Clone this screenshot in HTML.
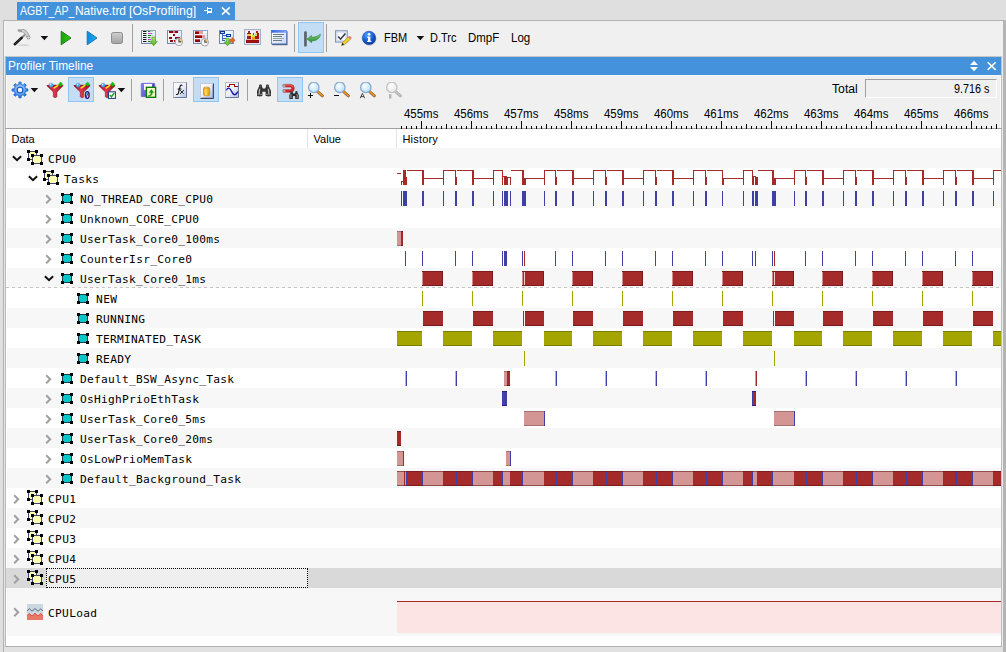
<!DOCTYPE html>
<html lang="en"><head><meta charset="utf-8"><title>Profiler Timeline</title>
<style>
html,body{margin:0;padding:0;}
body{width:1006px;height:652px;overflow:hidden;background:#dfdfdf;}
#root{position:relative;width:1006px;height:652px;overflow:hidden;background:#dfdfdf;}
#root div,#root span,#root svg{position:absolute;display:block;}
#root span{white-space:pre;}
</style></head><body><div id="root">
<div style="left:3px;top:20px;width:1003px;height:1px;background:#b2b2b2;"></div>
<div style="left:3px;top:20px;width:1px;height:632px;background:#b2b2b2;"></div>
<div style="left:4px;top:21px;width:999px;height:626px;background:#f0f0f0;"></div>
<div style="left:4px;top:21px;width:1px;height:35px;background:#f6f6f6;"></div>
<div style="left:4px;top:56px;width:1px;height:591px;background:#e6e6e6;"></div>
<div style="left:1002px;top:56px;width:1px;height:591px;background:#ebebeb;"></div>
<div style="left:5px;top:56px;width:997px;height:1px;background:#c6c6c6;"></div>
<div style="left:1003px;top:20px;width:3px;height:632px;background:#b4b4b4;"></div>
<div style="left:4px;top:647px;width:999px;height:5px;background:#e1e1e1;"></div>
<div style="left:17px;top:2px;width:218px;height:18px;background:#4592dc;"></div>
<span id="t1" style="left:19.9px;top:2.64px;font:12.3px/16px 'Liberation Sans', sans-serif;color:#fff;letter-spacing:0.000px;transform:scaleX(0.8543);transform-origin:0 0;">AGBT_AP_</span>
<span id="t2" style="left:74.6px;top:2.64px;font:12.3px/16px 'Liberation Sans', sans-serif;color:#fff;letter-spacing:0.000px;transform:scaleX(0.9688);transform-origin:0 0;">Native.trd </span>
<span id="t3" style="left:129.2px;top:2.64px;font:12.3px/16px 'Liberation Sans', sans-serif;color:#fff;letter-spacing:0.000px;transform:scaleX(1.0032);transform-origin:0 0;">[OsProfiling]</span>
<svg style="left:203px;top:6px" width="11" height="10" viewBox="0 0 11 10" ><g fill="#fff" shape-rendering="crispEdges"><rect x="1" y="4" width="3" height="1"/><rect x="4" y="1" width="1" height="7"/><rect x="5" y="2" width="4" height="1"/><rect x="8" y="2" width="1" height="5"/><rect x="5" y="5" width="4" height="2"/></g></svg>
<svg style="left:220px;top:6px" width="12" height="11" viewBox="0 0 12 11" ><path d="M1.9 1.4L9.7 8.6M9.7 1.4L1.9 8.6" stroke="#fff" stroke-width="1.5" fill="none"/></svg>
<svg style="left:12px;top:29px" width="20" height="18" viewBox="0 0 20 18" ><ellipse cx="11.5" cy="16.2" rx="6" ry="0.9" fill="#d6d6d6"/>
<path d="M9.6 8.9L12.4 6.2" stroke="#8a8a8a" stroke-width="2" stroke-linecap="round"/>
<path d="M2.8 15.2L9.6 8.9" stroke="#161616" stroke-width="2.6" stroke-linecap="round"/>
<path d="M3.4 14.6L9 9.4" stroke="#8a8a8a" stroke-width="0.6" stroke-dasharray="0.8 0.9"/>
<path d="M7.4 1.5C10.2 1 13 2.2 14.6 4.6C15.5 6 16 7 16.3 8" stroke="#8c8c8c" stroke-width="3.5" fill="none" stroke-linecap="round"/>
<path d="M7.4 1.5C10.2 1 13 2.2 14.6 4.6C15.5 6 16 7 16.3 8" stroke="#cfcfcf" stroke-width="2.3" fill="none" stroke-linecap="round"/>
<path d="M7 1.2L10 2.4" stroke="#8c8c8c" stroke-width="1.2"/>
<circle cx="16.5" cy="8.5" r="1.5" fill="#ececec" stroke="#868686" stroke-width="0.8"/></svg>
<svg style="left:40px;top:36px" width="9" height="5" viewBox="0 0 9 5" ><path d="M0.6 0H8.2L4.4 4.3Z" fill="#111"/></svg>
<svg style="left:59.4px;top:29px" width="14" height="18" viewBox="0 0 14 18" ><defs><linearGradient id="pg" x1="0" y1="0" x2="1" y2="0"><stop offset="0" stop-color="#1e9e10"/><stop offset="1" stop-color="#2fd000"/></linearGradient></defs>
<path d="M2.2 2.2V15.8L12 9Z" fill="url(#pg)" stroke="#237a23" stroke-width="1" stroke-linejoin="round"/></svg>
<svg style="left:85.4px;top:29px" width="14" height="18" viewBox="0 0 14 18" ><defs><linearGradient id="pb" x1="0" y1="0" x2="1" y2="0"><stop offset="0" stop-color="#0a88dc"/><stop offset="1" stop-color="#14b4ff"/></linearGradient></defs>
<path d="M2.2 2.2V15.8L12 9Z" fill="url(#pb)" stroke="#1a78b4" stroke-width="1" stroke-linejoin="round"/></svg>
<svg style="left:110px;top:31px" width="14" height="14" viewBox="0 0 14 14" ><defs><linearGradient id="sg" x1="0" y1="0" x2="0" y2="1"><stop offset="0" stop-color="#cfcfcf"/><stop offset="1" stop-color="#a2a2a2"/></linearGradient></defs>
<rect x="1.5" y="1.5" width="11" height="11" rx="1.8" fill="url(#sg)" stroke="#8e8e8e" stroke-width="1"/></svg>
<div style="left:132px;top:24px;width:1px;height:28px;background:#a0a0a0;"></div>
<svg style="left:141px;top:29px" width="17" height="18" viewBox="0 0 17 18" ><defs><linearGradient id="p1" x1="0" y1="0" x2="1" y2="1"><stop offset="0" stop-color="#ffffff"/><stop offset="0.5" stop-color="#eef2fb"/><stop offset="1" stop-color="#bccae6"/></linearGradient></defs>
<rect x="0.5" y="1.5" width="14" height="13" fill="url(#p1)" stroke="#94a4c4"/><path d="M0.5 1.5V14.5H14.5" stroke="#7686aa" fill="none"/><g shape-rendering="crispEdges"><rect x="2" y="2" width="3" height="1" fill="#1a1a1a"/><rect x="5" y="2" width="1" height="1" fill="#9a9a9a"/><rect x="7" y="2" width="2" height="1" fill="#0a8a0a"/><rect x="9" y="2" width="3" height="1" fill="#c8ccd4"/><rect x="2" y="4" width="3" height="1" fill="#1a1a1a"/><rect x="5" y="4" width="1" height="1" fill="#9a9a9a"/><rect x="7" y="4" width="4" height="1" fill="#c040d0"/><rect x="11" y="4" width="1" height="1" fill="#c8ccd4"/><rect x="2" y="6" width="3" height="1" fill="#1a1a1a"/><rect x="5" y="6" width="1" height="1" fill="#9a9a9a"/><rect x="7" y="6" width="3" height="1" fill="#0a8a0a"/><rect x="10" y="6" width="2" height="1" fill="#c8ccd4"/><rect x="2" y="8" width="3" height="1" fill="#1a1a1a"/><rect x="5" y="8" width="1" height="1" fill="#9a9a9a"/><rect x="7" y="8" width="2" height="1" fill="#0a8a0a"/><rect x="9" y="8" width="3" height="1" fill="#c8ccd4"/><rect x="2" y="10" width="3" height="1" fill="#1a1a1a"/><rect x="5" y="10" width="1" height="1" fill="#9a9a9a"/><rect x="7" y="10" width="3" height="1" fill="#c040d0"/><rect x="10" y="10" width="2" height="1" fill="#c8ccd4"/><rect x="2" y="12" width="3" height="1" fill="#1a1a1a"/><rect x="5" y="12" width="1" height="1" fill="#9a9a9a"/><rect x="7" y="12" width="2" height="1" fill="#0a8a0a"/><rect x="9" y="12" width="3" height="1" fill="#c8ccd4"/></g>
<defs><linearGradient id="ga" x1="0" y1="0" x2="0" y2="1"><stop offset="0" stop-color="#b4e870"/><stop offset="1" stop-color="#4cb020"/></linearGradient></defs>
<path d="M11 8.2H14.4V12.4H16.2L12.7 16.8L9.2 12.4H11Z" fill="url(#ga)" stroke="#4a9a20" stroke-width="0.6"/></svg>
<svg style="left:167px;top:29px" width="18" height="18" viewBox="0 0 18 18" ><defs><linearGradient id="p2" x1="0" y1="0" x2="1" y2="1"><stop offset="0" stop-color="#ffffff"/><stop offset="0.5" stop-color="#eef2fb"/><stop offset="1" stop-color="#bccae6"/></linearGradient></defs>
<rect x="0.5" y="1.5" width="14" height="13" fill="url(#p2)" stroke="#94a4c4"/><path d="M0.5 1.5V14.5H14.5" stroke="#7686aa" fill="none"/><g shape-rendering="crispEdges" fill="#900808"><rect x="2" y="2" width="4" height="2"/><rect x="6" y="2" width="2" height="2" fill="#d08080"/><rect x="8" y="2" width="3" height="2"/><rect x="6" y="5" width="2" height="2"/><rect x="2" y="8" width="3" height="2"/><rect x="8" y="8" width="5" height="2"/><rect x="3" y="11" width="3" height="2"/><rect x="7" y="11" width="2" height="2"/></g><circle cx="11.9" cy="12.9" r="3.7" fill="#f6f6f6" stroke="#a4a4a4" stroke-width="1"/>
<path d="M11.9 12.9V9.7A3.2 3.2 0 0 1 15.100000000000001 12.9Z" fill="#f0c070"/>
<path d="M11.9 10.3V12.9H14.3" stroke="#505050" stroke-width="1.1" fill="none"/></svg>
<svg style="left:193px;top:29px" width="18" height="18" viewBox="0 0 18 18" ><defs><linearGradient id="p3" x1="0" y1="0" x2="1" y2="1"><stop offset="0" stop-color="#ffffff"/><stop offset="0.5" stop-color="#eef2fb"/><stop offset="1" stop-color="#bccae6"/></linearGradient></defs>
<rect x="0.5" y="1.5" width="14" height="13" fill="url(#p3)" stroke="#94a4c4"/><path d="M0.5 1.5V14.5H14.5" stroke="#7686aa" fill="none"/><g shape-rendering="crispEdges"><rect x="2" y="2" width="4" height="3" fill="#900808"/><rect x="6" y="2" width="4" height="3" fill="#e0a0a0"/><rect x="2" y="6" width="7" height="3" fill="#900808"/><rect x="9" y="6" width="3" height="3" fill="#e0a0a0"/><rect x="2" y="10" width="5" height="3" fill="#900808"/>
<rect x="2" y="2" width="4" height="1" fill="#c05050"/><rect x="2" y="6" width="7" height="1" fill="#c05050"/><rect x="2" y="10" width="5" height="1" fill="#c05050"/></g><circle cx="11.8" cy="13.3" r="3.7" fill="#f6f6f6" stroke="#a4a4a4" stroke-width="1"/>
<path d="M11.8 13.3V10.100000000000001A3.2 3.2 0 0 1 15.0 13.3Z" fill="#f0c070"/>
<path d="M11.8 10.700000000000001V13.3H14.200000000000001" stroke="#505050" stroke-width="1.1" fill="none"/></svg>
<svg style="left:219px;top:29px" width="18" height="18" viewBox="0 0 18 18" ><defs><linearGradient id="p4" x1="0" y1="0" x2="1" y2="1"><stop offset="0" stop-color="#ffffff"/><stop offset="0.5" stop-color="#eef2fb"/><stop offset="1" stop-color="#bccae6"/></linearGradient></defs>
<rect x="0.5" y="1.5" width="14" height="13" fill="url(#p4)" stroke="#94a4c4"/><path d="M0.5 1.5V14.5H14.5" stroke="#7686aa" fill="none"/><g shape-rendering="crispEdges"><rect x="1" y="2" width="5" height="3" fill="#0a38a0"/><rect x="2" y="3" width="3" height="1" fill="#c8d8ff"/><rect x="7" y="5" width="5" height="3" fill="#0a38a0"/><rect x="8" y="6" width="3" height="1" fill="#c8d8ff"/>
<rect x="3" y="5" width="1" height="7" fill="#3868c8"/><rect x="3" y="6" width="4" height="1" fill="#3868c8"/><rect x="3" y="9" width="4" height="1" fill="#3868c8"/><rect x="3" y="11" width="3" height="1" fill="#3868c8"/></g>
<path d="M10.6 10.2H13V8.4L16.2 11.3L13 14.2V12.4H10.6Z" fill="#e06830" stroke="#b84818" stroke-width="0.5"/>
<path d="M7.2 9.2H9.8V13H11.8L8.5 16.8L5.2 13H7.2Z" fill="url(#ga)" stroke="#3a9a20" stroke-width="0.6"/></svg>
<svg style="left:244px;top:29px" width="18" height="17" viewBox="0 0 18 17" ><defs><linearGradient id="p5" x1="0" y1="0" x2="1" y2="1"><stop offset="0" stop-color="#ffffff"/><stop offset="1" stop-color="#c4d0ea"/></linearGradient></defs>
<rect x="0.5" y="0.5" width="16" height="15" fill="url(#p5)" stroke="#a4b0c8"/><rect x="1.5" y="1.5" width="14" height="13" fill="none" stroke="#dfe5f2"/>
<g shape-rendering="crispEdges"><rect x="2" y="10" width="13" height="1" fill="#e8b0b0"/><rect x="2" y="11" width="13" height="3" fill="#981010"/>
<rect x="4" y="2" width="2" height="2" fill="#b02020"/><rect x="3" y="4" width="4" height="6" fill="#a01818"/><rect x="3" y="5" width="4" height="2" fill="#e8d040"/>
<rect x="9" y="4" width="1" height="2" fill="#c03030"/><rect x="8" y="6" width="3" height="5" fill="#f0a020"/><rect x="8" y="6" width="3" height="2" fill="#d8e040"/>
<rect x="12" y="2" width="2" height="2" fill="#b02020"/><rect x="11" y="4" width="4" height="6" fill="#a01818"/><rect x="11" y="4" width="2" height="3" fill="#d8d840"/></g></svg>
<svg style="left:271px;top:29px" width="18" height="18" viewBox="0 0 18 18" ><defs><linearGradient id="p6" x1="0" y1="0" x2="1" y2="1"><stop offset="0" stop-color="#ffffff"/><stop offset="1" stop-color="#c8d8f8"/></linearGradient><linearGradient id="t6" x1="0" y1="0" x2="1" y2="0"><stop offset="0" stop-color="#3a68e0"/><stop offset="1" stop-color="#7aa0f0"/></linearGradient></defs>
<rect x="1.2" y="2.2" width="15.3" height="14" fill="#2a4468" opacity="0.85"/>
<rect x="0.5" y="1.5" width="15" height="13.4" fill="url(#p6)" stroke="#5a78c0" stroke-width="0.8"/>
<rect x="0.2" y="1.1" width="15.6" height="2.6" fill="url(#t6)"/>
<g shape-rendering="crispEdges" fill="#68807c"><rect x="2" y="5" width="11" height="1"/><rect x="2" y="7" width="9" height="1"/><rect x="2" y="9" width="11" height="1" fill="#98a8a8"/><rect x="2" y="11" width="9" height="1"/></g></svg>
<div style="left:294px;top:24px;width:1px;height:28px;background:#a0a0a0;"></div>
<div style="left:298px;top:22px;width:26px;height:31px;background:#c3ddf4;box-sizing:border-box;border:1px solid #90c6f3;"></div>
<svg style="left:303px;top:29px" width="19" height="19" viewBox="0 0 19 19" ><defs><linearGradient id="gt" x1="0" y1="0" x2="0" y2="1"><stop offset="0" stop-color="#7cd07c"/><stop offset="1" stop-color="#2a8a2a"/></linearGradient></defs>
<rect x="1.1" y="2.2" width="2.7" height="15.4" rx="1.2" fill="#5c646c"/>
<path d="M4 10L8.6 6.3V8.3C12 8.3 14.4 7.4 17.4 5C17.2 9.4 13.6 12 8.6 11.9V13.7Z" fill="url(#gt)" stroke="#2a7a2a" stroke-width="0.5"/></svg>
<div style="left:326px;top:24px;width:1px;height:28px;background:#a0a0a0;"></div>
<svg style="left:334px;top:29px" width="19" height="19" viewBox="0 0 19 19" ><rect x="1.6" y="1.8" width="11.6" height="11.2" fill="#f8fbff" stroke="#8494b4" stroke-width="1.2"/>
<rect x="2.9" y="3.1" width="9" height="8.6" fill="none" stroke="#ccd6ea" stroke-width="1"/>
<path d="M4.2 7.6L6.6 10.2L11.4 4.6" stroke="#34363e" stroke-width="1.5" fill="none"/>
<path d="M7.6 16.4L8.6 13.4L14.6 7.8L16.8 10L10.6 15.6Z" fill="#f2d428" stroke="#8a7a3a" stroke-width="0.6"/>
<path d="M14 8.4L16.2 10.6L17.4 9.4C17.8 9 17.8 8.6 17.4 8.2L16.4 7.2C16 6.8 15.6 6.8 15.2 7.2Z" fill="#e88070"/>
<path d="M7.6 16.4L8.5 13.8L10.2 15.5Z" fill="#222"/></svg>
<svg style="left:361px;top:30px" width="17" height="17" viewBox="0 0 17 17" ><defs><radialGradient id="ig" cx="0.38" cy="0.28" r="0.8"><stop offset="0" stop-color="#4aa0ff"/><stop offset="0.6" stop-color="#1458d0"/><stop offset="1" stop-color="#0a3498"/></radialGradient></defs>
<ellipse cx="8.6" cy="9.2" rx="6.8" ry="6.6" fill="#9aa0b0" opacity="0.5"/>
<circle cx="8" cy="7.9" r="6.7" fill="url(#ig)" stroke="#0a3296" stroke-width="0.5"/>
<rect x="7" y="6.6" width="2.4" height="5" fill="#fff"/><rect x="6.1" y="6.6" width="2" height="1.1" fill="#fff"/><rect x="6" y="10.8" width="4.4" height="1.1" fill="#fff"/><circle cx="8.1" cy="4.3" r="1.35" fill="#fff"/></svg>
<span id="t4" style="left:383.9px;top:29.74px;font:12.3px/16px 'Liberation Sans', sans-serif;color:#000;letter-spacing:0.000px;transform:scaleX(0.8972);transform-origin:0 0;">FBM</span>
<svg style="left:416.4px;top:36px" width="9" height="5" viewBox="0 0 9 5" ><path d="M0.6 0H8.2L4.4 4.3Z" fill="#111"/></svg>
<span id="t5" style="left:429.8px;top:29.74px;font:12.3px/16px 'Liberation Sans', sans-serif;color:#000;letter-spacing:0.000px;transform:scaleX(0.8916);transform-origin:0 0;">D.Trc</span>
<span id="t6" style="left:467.9px;top:29.74px;font:12.3px/16px 'Liberation Sans', sans-serif;color:#000;letter-spacing:0.000px;transform:scaleX(0.9318);transform-origin:0 0;">DmpF</span>
<span id="t7" style="left:510.8px;top:29.74px;font:12.3px/16px 'Liberation Sans', sans-serif;color:#000;letter-spacing:0.000px;transform:scaleX(0.9352);transform-origin:0 0;">Log</span>
<div style="left:6px;top:57px;width:995px;height:18px;background:#4592dc;"></div>
<span id="t8" style="left:7.7px;top:57.74px;font:12.3px/16px 'Liberation Sans', sans-serif;color:#fff;letter-spacing:0.000px;transform:scaleX(0.9665);transform-origin:0 0;">Profiler Timeline</span>
<svg style="left:969px;top:60px" width="10" height="12" viewBox="0 0 10 12" ><path d="M1 5L5 0.8L9 5ZM1 7L5 11.2L9 7Z" fill="#fff"/></svg>
<svg style="left:986px;top:60px" width="12" height="12" viewBox="0 0 12 12" ><path d="M1.7 2.3L9.7 9.9M9.7 2.3L1.7 9.9" stroke="#fff" stroke-width="1.5" fill="none"/></svg>
<div style="left:6px;top:75px;width:995px;height:1px;background:#f8f8f8;"></div>
<div style="left:6px;top:75px;width:1px;height:53px;background:#fafafa;"></div>
<div style="left:1000px;top:75px;width:1px;height:53px;background:#fafafa;"></div>
<svg style="left:11px;top:81px" width="18" height="18" viewBox="0 0 18 18" ><defs><radialGradient id="gg" cx="0.5" cy="0.45" r="0.55"><stop offset="0.3" stop-color="#b4d6fa"/><stop offset="0.62" stop-color="#5aa0ee"/><stop offset="1" stop-color="#0e5cd0"/></radialGradient></defs>
<path d="M10.05 16.83L7.95 16.83L7.80 14.57L5.91 13.79L4.21 15.28L2.72 13.79L4.21 12.09L3.43 10.20L1.17 10.05L1.17 7.95L3.43 7.80L4.21 5.91L2.72 4.21L4.21 2.72L5.91 4.21L7.80 3.43L7.95 1.17L10.05 1.17L10.20 3.43L12.09 4.21L13.79 2.72L15.28 4.21L13.79 5.91L14.57 7.80L16.83 7.95L16.83 10.05L14.57 10.20L13.79 12.09L15.28 13.79L13.79 15.28L12.09 13.79L10.20 14.57Z" fill="url(#gg)" stroke="#1a66d4" stroke-width="0.9" stroke-linejoin="round"/>
<circle cx="9" cy="9" r="2.9" fill="#f2f4f8" stroke="#1a5cc8" stroke-width="1.3"/></svg>
<svg style="left:30.4px;top:88px" width="9" height="5" viewBox="0 0 9 5" ><path d="M0.6 0H8.2L4.4 4.3Z" fill="#111"/></svg>
<svg style="left:46px;top:81px" width="20" height="19" viewBox="0 0 20 19" ><defs><linearGradient id="fg47" x1="0" y1="0" x2="1" y2="0"><stop offset="0" stop-color="#a00c1c"/><stop offset="0.45" stop-color="#de3850"/><stop offset="1" stop-color="#980c18"/></linearGradient></defs>
<g transform="translate(1 0)"><path d="M-0.2 4.7C-0.2 3.9 16.1 3.9 16.1 4.7L9.9 11V15.6C9.9 16.9 6.3 16.9 6.3 15.6V11Z" fill="url(#fg47)" stroke="#8a0a14" stroke-width="0.5" stroke-linejoin="round"/>
<ellipse cx="7.95" cy="4.8" rx="7.7" ry="0.9" fill="#a40c1e"/>
<path d="M7.2 6.8L10.8 4.5" stroke="#f8e020" stroke-width="1.6" stroke-linecap="round"/>
<circle cx="4.1" cy="4.2" r="2.05" fill="#4aacf0" stroke="#2a84d0" stroke-width="0.4"/><circle cx="3.6" cy="3.6" r="0.8" fill="#d4f0ff"/>
<path d="M13.6 0.9L15.7 3.2L13.6 5.5L11.5 3.2Z" fill="#0cc40c" stroke="#0a9a0a" stroke-width="0.4"/></g></svg>
<div style="left:68px;top:77px;width:26px;height:25px;background:#c3ddf4;box-sizing:border-box;border:1px solid #90c6f3;"></div>
<svg style="left:73px;top:81px" width="20" height="19" viewBox="0 0 20 19" ><defs><linearGradient id="fg74" x1="0" y1="0" x2="1" y2="0"><stop offset="0" stop-color="#a00c1c"/><stop offset="0.45" stop-color="#de3850"/><stop offset="1" stop-color="#980c18"/></linearGradient></defs>
<g transform="translate(1 0)"><path d="M-0.2 4.7C-0.2 3.9 16.1 3.9 16.1 4.7L9.9 11V15.6C9.9 16.9 6.3 16.9 6.3 15.6V11Z" fill="url(#fg74)" stroke="#8a0a14" stroke-width="0.5" stroke-linejoin="round"/>
<ellipse cx="7.95" cy="4.8" rx="7.7" ry="0.9" fill="#a40c1e"/>
<path d="M7.2 6.8L10.8 4.5" stroke="#f8e020" stroke-width="1.6" stroke-linecap="round"/>
<circle cx="4.1" cy="4.2" r="2.05" fill="#4aacf0" stroke="#2a84d0" stroke-width="0.4"/><circle cx="3.6" cy="3.6" r="0.8" fill="#d4f0ff"/>
<path d="M13.6 0.9L15.7 3.2L13.6 5.5L11.5 3.2Z" fill="#0cc40c" stroke="#0a9a0a" stroke-width="0.4"/><text x="10.2" y="17.6" font-family="Liberation Sans, sans-serif" font-weight="bold" font-size="10.6" fill="#dfe6f6" stroke="#dfe6f6" stroke-width="1.3">0</text><text x="10.2" y="17.6" font-family="Liberation Sans, sans-serif" font-weight="bold" font-size="10.6" fill="#14146c">0</text><path d="M11.9 16.4L14.5 11.4" stroke="#14146c" stroke-width="0.8"/></g></svg>
<svg style="left:98px;top:81px" width="20" height="19" viewBox="0 0 20 19" ><defs><linearGradient id="fg99" x1="0" y1="0" x2="1" y2="0"><stop offset="0" stop-color="#a00c1c"/><stop offset="0.45" stop-color="#de3850"/><stop offset="1" stop-color="#980c18"/></linearGradient></defs>
<g transform="translate(1 0)"><path d="M-0.2 4.7C-0.2 3.9 16.1 3.9 16.1 4.7L9.9 11V15.6C9.9 16.9 6.3 16.9 6.3 15.6V11Z" fill="url(#fg99)" stroke="#8a0a14" stroke-width="0.5" stroke-linejoin="round"/>
<ellipse cx="7.95" cy="4.8" rx="7.7" ry="0.9" fill="#a40c1e"/>
<path d="M7.2 6.8L10.8 4.5" stroke="#f8e020" stroke-width="1.6" stroke-linecap="round"/>
<circle cx="4.1" cy="4.2" r="2.05" fill="#4aacf0" stroke="#2a84d0" stroke-width="0.4"/><circle cx="3.6" cy="3.6" r="0.8" fill="#d4f0ff"/>
<path d="M13.6 0.9L15.7 3.2L13.6 5.5L11.5 3.2Z" fill="#0cc40c" stroke="#0a9a0a" stroke-width="0.4"/><rect x="9.4" y="10.8" width="7" height="6.6" fill="#fff" stroke="#183878" stroke-width="1"/><path d="M10.8 14L12.4 15.8L15.2 12" stroke="#18a018" stroke-width="1.4" fill="none"/></g></svg>
<svg style="left:117.4px;top:88px" width="9" height="5" viewBox="0 0 9 5" ><path d="M0.6 0H8.2L4.4 4.3Z" fill="#111"/></svg>
<div style="left:131px;top:79px;width:1px;height:22px;background:#a0a0a0;"></div>
<svg style="left:140px;top:82px" width="18" height="17" viewBox="0 0 18 17" ><defs><linearGradient id="fl" x1="0" y1="0" x2="1" y2="1"><stop offset="0" stop-color="#8080f4"/><stop offset="1" stop-color="#4c4cc4"/></linearGradient></defs>
<rect x="1.2" y="1.3" width="13.6" height="13.4" rx="0.8" fill="url(#fl)" stroke="#5454c8" stroke-width="0.5"/>
<rect x="4" y="2" width="8" height="6" fill="#fbfbff"/><rect x="12.8" y="2.4" width="1" height="2" fill="#303090"/>
<rect x="6.4" y="5.3" width="9.2" height="10" fill="#ffffcc" stroke="#0a7a0a" stroke-width="1.4"/>
<path d="M8.4 13.4C10 13.4 11 12.6 11 10.6H9L11.4 7.4L13.8 10.6H12.4C12.4 13.2 10.6 14.4 8.4 14.4Z" fill="#12a012" stroke="#0a8a0a" stroke-width="0.4"/></svg>
<div style="left:163px;top:79px;width:1px;height:22px;background:#a0a0a0;"></div>
<svg style="left:173px;top:82px" width="15" height="17" viewBox="0 0 15 17" ><defs><linearGradient id="b1" x1="0" y1="0" x2="1" y2="1"><stop offset="0" stop-color="#ffffff"/><stop offset="0.5" stop-color="#eef1fa"/><stop offset="1" stop-color="#acbce0"/></linearGradient></defs>
<rect x="0.5" y="0.5" width="13" height="15" fill="url(#b1)" stroke="#b4bccc"/><path d="M0.5 15.5H13.5V0.5" stroke="#6a7a9a" fill="none"/>
<path d="M9.4 3.6C8.4 2.6 7.4 3 7 4.6L5.4 11C5 12.4 4.2 12.8 3 12.4M4.6 7H8.4" stroke="#111" stroke-width="1.1" fill="none"/>
<path d="M7.2 8.2L10.6 11.8M10.8 8L7 12" stroke="#222" stroke-width="1" fill="none"/></svg>
<div style="left:193px;top:77px;width:26px;height:25px;background:#c3ddf4;box-sizing:border-box;border:1px solid #90c6f3;"></div>
<svg style="left:200px;top:83px" width="15" height="17" viewBox="0 0 15 17" ><defs><linearGradient id="b2" x1="0" y1="0" x2="1" y2="1"><stop offset="0" stop-color="#ffffff"/><stop offset="0.45" stop-color="#eef0fb"/><stop offset="1" stop-color="#a2b2e2"/></linearGradient>
<linearGradient id="cy" x1="0" y1="0" x2="1" y2="0"><stop offset="0" stop-color="#e89800"/><stop offset="0.35" stop-color="#ffe060"/><stop offset="1" stop-color="#e09000"/></linearGradient></defs>
<rect x="0.5" y="0.5" width="13" height="15" fill="url(#b2)" stroke="#c4ccdc"/><path d="M0.5 15.5H13.5V0.5" stroke="#3a4a66" fill="none"/><path d="M1.5 14.5H12.5V1.5" stroke="#8c9cc4" fill="none" opacity="0.7"/>
<rect x="3.5" y="4.2" width="6.2" height="8.6" rx="1.6" fill="url(#cy)" stroke="#c88a10" stroke-width="0.7"/><path d="M4 5.2C5 5.9 8.2 5.9 9.2 5.2" stroke="#c88a10" stroke-width="0.5" fill="none"/></svg>
<svg style="left:225px;top:82px" width="15" height="17" viewBox="0 0 15 17" ><defs><linearGradient id="b3" x1="0" y1="0" x2="1" y2="1"><stop offset="0" stop-color="#ffffff"/><stop offset="0.5" stop-color="#eef1fa"/><stop offset="1" stop-color="#acbce0"/></linearGradient></defs>
<rect x="0.5" y="0.5" width="13" height="15" fill="url(#b3)" stroke="#b4bccc"/><path d="M0.5 15.5H13.5V0.5" stroke="#6a7a9a" fill="none"/>
<path d="M1.5 4.5H4.5V2.5H9.5V4.5H12.5" stroke="#b00808" stroke-width="1" fill="none" shape-rendering="crispEdges"/>
<path d="M1.4 8.4C2.4 5.4 4.6 5.2 6.6 9.4C8.6 13.8 11 13.8 12.8 9.6" stroke="#1414b0" stroke-width="1.3" fill="none"/></svg>
<div style="left:247px;top:79px;width:1px;height:22px;background:#a0a0a0;"></div>
<svg style="left:256px;top:83px" width="16" height="15" viewBox="0 0 16 15" ><g transform="translate(0 0.4) scale(1.0)"><path d="M1 12.2V7.6L3 3V1.8C3 0.8 6 0.8 6 1.8V3L6.8 5H9.2L10 3V1.8C10 0.8 13 0.8 13 1.8V3L15 7.6V12.2C15 13.4 9.6 13.4 9.6 12.2V8.4H6.4V12.2C6.4 13.4 1 13.4 1 12.2Z" fill="#343434"/>
<path d="M3.6 5.4L3.2 10.6M12.4 5.4L12.8 10.6" stroke="#b4b4b4" stroke-width="1.3"/><path d="M1.6 11H6M10 11H14.4" stroke="#9a9a9a" stroke-width="0.8"/><path d="M3.4 2.6H5.6M10.4 2.6H12.6" stroke="#8a8a8a" stroke-width="0.7"/></g></svg>
<div style="left:277px;top:77px;width:26px;height:25px;background:#c3ddf4;box-sizing:border-box;border:1px solid #90c6f3;"></div>
<svg style="left:282px;top:83px" width="18" height="17" viewBox="0 0 18 17" ><path d="M1 1.4H8.4A3.9 3.9 0 0 1 8.4 9.2H1V6.7H8.4A1.35 1.35 0 0 0 8.4 4H1Z" fill="#dc2424" stroke="#9a1010" stroke-width="0.5"/>
<path d="M3.6 2.2H8.4A3.1 3.1 0 0 1 11.4 4.4" stroke="#f08080" stroke-width="0.7" fill="none"/>
<rect x="0.8" y="1.4" width="2.6" height="2.6" fill="#a4a4a4"/><rect x="0.8" y="6.7" width="2.6" height="2.5" fill="#a4a4a4"/><g transform="translate(6.6 7.2) scale(0.68)"><path d="M1 12.2V7.6L3 3V1.8C3 0.8 6 0.8 6 1.8V3L6.8 5H9.2L10 3V1.8C10 0.8 13 0.8 13 1.8V3L15 7.6V12.2C15 13.4 9.6 13.4 9.6 12.2V8.4H6.4V12.2C6.4 13.4 1 13.4 1 12.2Z" fill="#2a2a2a"/>
<path d="M3.6 5.4L3.2 10.6M12.4 5.4L12.8 10.6" stroke="#b4b4b4" stroke-width="1.3"/><path d="M1.6 11H6M10 11H14.4" stroke="#9a9a9a" stroke-width="0.8"/><path d="M3.4 2.6H5.6M10.4 2.6H12.6" stroke="#8a8a8a" stroke-width="0.7"/></g></svg>
<svg style="left:307px;top:82px" width="18" height="18" viewBox="0 0 18 18" ><defs><radialGradient id="z307" cx="0.4" cy="0.35" r="0.7"><stop offset="0" stop-color="#ffffff"/><stop offset="1" stop-color="#b0e0ff"/></radialGradient></defs>
<path d="M10.6 9.6L15.4 13.8" stroke="#8a6a4a" stroke-width="3" stroke-linecap="round"/>
<path d="M11 9.9L15.2 13.6" stroke="#e89020" stroke-width="1.7" stroke-linecap="round"/>
<circle cx="6.8" cy="5.4" r="5.2" fill="url(#z307)" stroke="#8ca8cc" stroke-width="1.3"/><path d="M0.5 13.5H5.5M3 11V16" stroke="#111" stroke-width="1" shape-rendering="crispEdges"/></svg>
<svg style="left:333px;top:82px" width="18" height="18" viewBox="0 0 18 18" ><defs><radialGradient id="z333" cx="0.4" cy="0.35" r="0.7"><stop offset="0" stop-color="#ffffff"/><stop offset="1" stop-color="#b0e0ff"/></radialGradient></defs>
<path d="M10.6 9.6L15.4 13.8" stroke="#8a6a4a" stroke-width="3" stroke-linecap="round"/>
<path d="M11 9.9L15.2 13.6" stroke="#e89020" stroke-width="1.7" stroke-linecap="round"/>
<circle cx="6.8" cy="5.4" r="5.2" fill="url(#z333)" stroke="#8ca8cc" stroke-width="1.3"/><path d="M0.5 13.5H5.5" stroke="#111" stroke-width="1" shape-rendering="crispEdges"/></svg>
<svg style="left:359px;top:82px" width="18" height="18" viewBox="0 0 18 18" ><defs><radialGradient id="z359" cx="0.4" cy="0.35" r="0.7"><stop offset="0" stop-color="#ffffff"/><stop offset="1" stop-color="#b0e0ff"/></radialGradient></defs>
<path d="M10.6 9.6L15.4 13.8" stroke="#8a6a4a" stroke-width="3" stroke-linecap="round"/>
<path d="M11 9.9L15.2 13.6" stroke="#e89020" stroke-width="1.7" stroke-linecap="round"/>
<circle cx="6.8" cy="5.4" r="5.2" fill="url(#z359)" stroke="#8ca8cc" stroke-width="1.3"/><path d="M1.2 16.2L3.4 11.4L5.6 16.2M2 14.6H4.8" stroke="#333" stroke-width="0.9" fill="none"/></svg>
<svg style="left:385px;top:82px" width="18" height="18" viewBox="0 0 18 18" ><defs><radialGradient id="z385" cx="0.4" cy="0.35" r="0.7"><stop offset="0" stop-color="#ffffff"/><stop offset="1" stop-color="#e4e4e4"/></radialGradient></defs>
<path d="M10.6 9.6L15.4 13.8" stroke="#b0b0b0" stroke-width="3" stroke-linecap="round"/>
<path d="M11 9.9L15.2 13.6" stroke="#c0c0c0" stroke-width="1.7" stroke-linecap="round"/>
<circle cx="6.8" cy="5.4" r="5.2" fill="url(#z385)" stroke="#c4c4c4" stroke-width="1.3"/><rect x="4" y="12.2" width="2.4" height="4.4" fill="#b4b4b4"/></svg>
<span id="t9" style="left:832.0px;top:80.74px;font:12.3px/16px 'Liberation Sans', sans-serif;color:#000;letter-spacing:0.000px;transform:scaleX(0.9929);transform-origin:0 0;">Total</span>
<div style="left:865px;top:79px;width:132px;height:19px;background:#f0f0f0;box-sizing:border-box;border:1px solid #fff;border-top-color:#a0a0a0;border-left-color:#a0a0a0;"></div>
<span id="t10" style="left:954px;top:80.74px;font:12.3px/16px 'Liberation Sans', sans-serif;color:#000;letter-spacing:0.000px;transform:scaleX(0.8799);transform-origin:0 0;">9.716 s</span>
<span id="t11" style="left:403.8px;top:105.74px;font:12.3px/16px 'Liberation Sans', sans-serif;color:#000;letter-spacing:0.000px;transform:scaleX(0.9317);transform-origin:0 0;">455ms</span>
<span id="t12" style="left:453.8px;top:105.74px;font:12.3px/16px 'Liberation Sans', sans-serif;color:#000;letter-spacing:0.000px;transform:scaleX(0.9317);transform-origin:0 0;">456ms</span>
<span id="t13" style="left:503.8px;top:105.74px;font:12.3px/16px 'Liberation Sans', sans-serif;color:#000;letter-spacing:0.000px;transform:scaleX(0.9317);transform-origin:0 0;">457ms</span>
<span id="t14" style="left:553.8px;top:105.74px;font:12.3px/16px 'Liberation Sans', sans-serif;color:#000;letter-spacing:0.000px;transform:scaleX(0.9317);transform-origin:0 0;">458ms</span>
<span id="t15" style="left:603.8px;top:105.74px;font:12.3px/16px 'Liberation Sans', sans-serif;color:#000;letter-spacing:0.000px;transform:scaleX(0.9317);transform-origin:0 0;">459ms</span>
<span id="t16" style="left:653.8px;top:105.74px;font:12.3px/16px 'Liberation Sans', sans-serif;color:#000;letter-spacing:0.000px;transform:scaleX(0.9317);transform-origin:0 0;">460ms</span>
<span id="t17" style="left:703.8px;top:105.74px;font:12.3px/16px 'Liberation Sans', sans-serif;color:#000;letter-spacing:0.000px;transform:scaleX(0.9317);transform-origin:0 0;">461ms</span>
<span id="t18" style="left:753.8px;top:105.74px;font:12.3px/16px 'Liberation Sans', sans-serif;color:#000;letter-spacing:0.000px;transform:scaleX(0.9317);transform-origin:0 0;">462ms</span>
<span id="t19" style="left:803.8px;top:105.74px;font:12.3px/16px 'Liberation Sans', sans-serif;color:#000;letter-spacing:0.000px;transform:scaleX(0.9317);transform-origin:0 0;">463ms</span>
<span id="t20" style="left:853.8px;top:105.74px;font:12.3px/16px 'Liberation Sans', sans-serif;color:#000;letter-spacing:0.000px;transform:scaleX(0.9317);transform-origin:0 0;">464ms</span>
<span id="t21" style="left:903.8px;top:105.74px;font:12.3px/16px 'Liberation Sans', sans-serif;color:#000;letter-spacing:0.000px;transform:scaleX(0.9317);transform-origin:0 0;">465ms</span>
<span id="t22" style="left:953.8px;top:105.74px;font:12.3px/16px 'Liberation Sans', sans-serif;color:#000;letter-spacing:0.000px;transform:scaleX(0.9317);transform-origin:0 0;">466ms</span>
<div style="left:5px;top:57px;width:1px;height:590px;background:#bababa;"></div>
<div style="left:1001px;top:57px;width:1px;height:590px;background:#bebebe;"></div>
<div style="left:5px;top:128px;width:997px;height:1px;background:#a0a0a0;"></div>
<div style="left:5px;top:646px;width:997px;height:1px;background:#b0b0b0;"></div>
<svg style="left:397px;top:120px" width="604" height="9" viewBox="0 0 604 9" ><g fill="#000" shape-rendering="crispEdges"><rect x="4" y="6" width="1" height="3"/><rect x="9" y="6" width="1" height="3"/><rect x="14" y="6" width="1" height="3"/><rect x="19" y="6" width="1" height="3"/><rect x="24" y="1" width="1" height="8"/><rect x="29" y="6" width="1" height="3"/><rect x="34" y="6" width="1" height="3"/><rect x="39" y="6" width="1" height="3"/><rect x="44" y="6" width="1" height="3"/><rect x="49" y="4" width="1" height="5"/><rect x="54" y="6" width="1" height="3"/><rect x="59" y="6" width="1" height="3"/><rect x="64" y="6" width="1" height="3"/><rect x="69" y="6" width="1" height="3"/><rect x="74" y="1" width="1" height="8"/><rect x="79" y="6" width="1" height="3"/><rect x="84" y="6" width="1" height="3"/><rect x="89" y="6" width="1" height="3"/><rect x="94" y="6" width="1" height="3"/><rect x="99" y="4" width="1" height="5"/><rect x="104" y="6" width="1" height="3"/><rect x="109" y="6" width="1" height="3"/><rect x="114" y="6" width="1" height="3"/><rect x="119" y="6" width="1" height="3"/><rect x="124" y="1" width="1" height="8"/><rect x="129" y="6" width="1" height="3"/><rect x="134" y="6" width="1" height="3"/><rect x="139" y="6" width="1" height="3"/><rect x="144" y="6" width="1" height="3"/><rect x="149" y="4" width="1" height="5"/><rect x="154" y="6" width="1" height="3"/><rect x="159" y="6" width="1" height="3"/><rect x="164" y="6" width="1" height="3"/><rect x="169" y="6" width="1" height="3"/><rect x="174" y="1" width="1" height="8"/><rect x="179" y="6" width="1" height="3"/><rect x="184" y="6" width="1" height="3"/><rect x="189" y="6" width="1" height="3"/><rect x="194" y="6" width="1" height="3"/><rect x="199" y="4" width="1" height="5"/><rect x="204" y="6" width="1" height="3"/><rect x="209" y="6" width="1" height="3"/><rect x="214" y="6" width="1" height="3"/><rect x="219" y="6" width="1" height="3"/><rect x="224" y="1" width="1" height="8"/><rect x="229" y="6" width="1" height="3"/><rect x="234" y="6" width="1" height="3"/><rect x="239" y="6" width="1" height="3"/><rect x="244" y="6" width="1" height="3"/><rect x="249" y="4" width="1" height="5"/><rect x="254" y="6" width="1" height="3"/><rect x="259" y="6" width="1" height="3"/><rect x="264" y="6" width="1" height="3"/><rect x="269" y="6" width="1" height="3"/><rect x="274" y="1" width="1" height="8"/><rect x="279" y="6" width="1" height="3"/><rect x="284" y="6" width="1" height="3"/><rect x="289" y="6" width="1" height="3"/><rect x="294" y="6" width="1" height="3"/><rect x="299" y="4" width="1" height="5"/><rect x="304" y="6" width="1" height="3"/><rect x="309" y="6" width="1" height="3"/><rect x="314" y="6" width="1" height="3"/><rect x="319" y="6" width="1" height="3"/><rect x="324" y="1" width="1" height="8"/><rect x="329" y="6" width="1" height="3"/><rect x="334" y="6" width="1" height="3"/><rect x="339" y="6" width="1" height="3"/><rect x="344" y="6" width="1" height="3"/><rect x="349" y="4" width="1" height="5"/><rect x="354" y="6" width="1" height="3"/><rect x="359" y="6" width="1" height="3"/><rect x="364" y="6" width="1" height="3"/><rect x="369" y="6" width="1" height="3"/><rect x="374" y="1" width="1" height="8"/><rect x="379" y="6" width="1" height="3"/><rect x="384" y="6" width="1" height="3"/><rect x="389" y="6" width="1" height="3"/><rect x="394" y="6" width="1" height="3"/><rect x="399" y="4" width="1" height="5"/><rect x="404" y="6" width="1" height="3"/><rect x="409" y="6" width="1" height="3"/><rect x="414" y="6" width="1" height="3"/><rect x="419" y="6" width="1" height="3"/><rect x="424" y="1" width="1" height="8"/><rect x="429" y="6" width="1" height="3"/><rect x="434" y="6" width="1" height="3"/><rect x="439" y="6" width="1" height="3"/><rect x="444" y="6" width="1" height="3"/><rect x="449" y="4" width="1" height="5"/><rect x="454" y="6" width="1" height="3"/><rect x="459" y="6" width="1" height="3"/><rect x="464" y="6" width="1" height="3"/><rect x="469" y="6" width="1" height="3"/><rect x="474" y="1" width="1" height="8"/><rect x="479" y="6" width="1" height="3"/><rect x="484" y="6" width="1" height="3"/><rect x="489" y="6" width="1" height="3"/><rect x="494" y="6" width="1" height="3"/><rect x="499" y="4" width="1" height="5"/><rect x="504" y="6" width="1" height="3"/><rect x="509" y="6" width="1" height="3"/><rect x="514" y="6" width="1" height="3"/><rect x="519" y="6" width="1" height="3"/><rect x="524" y="1" width="1" height="8"/><rect x="529" y="6" width="1" height="3"/><rect x="534" y="6" width="1" height="3"/><rect x="539" y="6" width="1" height="3"/><rect x="544" y="6" width="1" height="3"/><rect x="549" y="4" width="1" height="5"/><rect x="554" y="6" width="1" height="3"/><rect x="559" y="6" width="1" height="3"/><rect x="564" y="6" width="1" height="3"/><rect x="569" y="6" width="1" height="3"/><rect x="574" y="1" width="1" height="8"/><rect x="579" y="6" width="1" height="3"/><rect x="584" y="6" width="1" height="3"/><rect x="589" y="6" width="1" height="3"/><rect x="594" y="6" width="1" height="3"/><rect x="599" y="4" width="1" height="5"/></g></svg>
<div style="left:6px;top:129px;width:995px;height:517px;background:#fff;"></div>
<div style="left:307px;top:129px;width:1px;height:19px;background:#e3e3e3;"></div>
<div style="left:396px;top:129px;width:1px;height:19px;background:#e3e3e3;"></div>
<span id="t23" style="left:11.6px;top:130.79px;font:11px/16px 'Liberation Sans', sans-serif;color:#000;letter-spacing:-0.083px;">Data</span>
<span id="t24" style="left:313.5px;top:130.79px;font:11px/16px 'Liberation Sans', sans-serif;color:#000;letter-spacing:0.043px;">Value</span>
<span id="t25" style="left:402.5px;top:130.79px;font:11px/16px 'Liberation Sans', sans-serif;color:#000;letter-spacing:0.178px;">History</span>
<div style="left:7px;top:148px;width:994px;height:20px;background:#f7f7f7;"></div>
<div style="left:7px;top:188px;width:994px;height:20px;background:#f7f7f7;"></div>
<div style="left:7px;top:228px;width:994px;height:20px;background:#f7f7f7;"></div>
<div style="left:7px;top:268px;width:994px;height:20px;background:#f7f7f7;"></div>
<div style="left:7px;top:308px;width:994px;height:20px;background:#f7f7f7;"></div>
<div style="left:7px;top:348px;width:994px;height:20px;background:#f7f7f7;"></div>
<div style="left:7px;top:388px;width:994px;height:20px;background:#f7f7f7;"></div>
<div style="left:7px;top:428px;width:994px;height:20px;background:#f7f7f7;"></div>
<div style="left:7px;top:468px;width:994px;height:20px;background:#f7f7f7;"></div>
<div style="left:7px;top:508px;width:994px;height:20px;background:#f7f7f7;"></div>
<div style="left:7px;top:548px;width:994px;height:20px;background:#f7f7f7;"></div>
<div style="left:6px;top:568px;width:995px;height:20px;background:#d9d9d9;"></div>
<div style="left:46px;top:568px;width:262px;height:20px;background:#efefef;box-sizing:border-box;border:1px dotted #000;"></div>
<div style="left:7px;top:588px;width:994px;height:48px;background:#f7f7f7;"></div>
<div style="left:6px;top:287px;width:995px;height:1px;background:repeating-linear-gradient(90deg,#c4c4c4 0,#c4c4c4 3px,transparent 3px,transparent 6px);"></div>
<svg style="left:11.6px;top:155px" width="10" height="7" viewBox="0 0 10 7" ><path d="M0.9 1.2L5 5.2L9.1 1.2" stroke="#111" stroke-width="2" fill="none"/></svg>
<svg style="left:27px;top:150px" width="16" height="15" viewBox="0 0 16 15" ><g shape-rendering="crispEdges"><rect x="1.5" y="1.5" width="8" height="8" fill="#ffffb4" stroke="#3a4a6a"/><g fill="#000"><rect x="0" y="0" width="3" height="3"/><rect x="8" y="0" width="3" height="3"/><rect x="0" y="8" width="3" height="3"/></g><rect x="5.5" y="5.5" width="9" height="8" fill="#ffffb4" stroke="#3a4a6a"/><g fill="#000"><rect x="4" y="4" width="3" height="3"/><rect x="13" y="4" width="3" height="3"/><rect x="4" y="12" width="3" height="3"/><rect x="13" y="12" width="3" height="3"/></g></g></svg>
<span id="t26" style="left:48px;top:149.52px;font:11.2px/20px 'DejaVu Sans Mono', 'Liberation Mono', monospace;color:#000;letter-spacing:0.349px;">CPU0</span>
<svg style="left:27.6px;top:175px" width="10" height="7" viewBox="0 0 10 7" ><path d="M0.9 1.2L5 5.2L9.1 1.2" stroke="#111" stroke-width="2" fill="none"/></svg>
<svg style="left:43px;top:170px" width="16" height="15" viewBox="0 0 16 15" ><g shape-rendering="crispEdges"><rect x="1.5" y="1.5" width="8" height="8" fill="#ffffb4" stroke="#3a4a6a"/><g fill="#000"><rect x="0" y="0" width="3" height="3"/><rect x="8" y="0" width="3" height="3"/><rect x="0" y="8" width="3" height="3"/></g><rect x="5.5" y="5.5" width="9" height="8" fill="#ffffb4" stroke="#3a4a6a"/><g fill="#000"><rect x="4" y="4" width="3" height="3"/><rect x="13" y="4" width="3" height="3"/><rect x="4" y="12" width="3" height="3"/><rect x="13" y="12" width="3" height="3"/></g></g></svg>
<span id="t27" style="left:64px;top:169.52px;font:11.2px/20px 'DejaVu Sans Mono', 'Liberation Mono', monospace;color:#000;letter-spacing:0.328px;">Tasks</span>
<svg style="left:45.4px;top:193.6px" width="7" height="11" viewBox="0 0 7 11" ><path d="M1.2 1.2L5.2 5.2L1.2 9.2" stroke="#a0a0a0" stroke-width="2" fill="none"/></svg>
<svg style="left:61px;top:193px" width="12" height="11" viewBox="0 0 12 11" ><g shape-rendering="crispEdges"><rect x="1.5" y="1.5" width="9" height="8" fill="#00c8c8" stroke="#1a3a4a"/><g fill="#000"><rect x="0" y="0" width="3" height="3"/><rect x="9" y="0" width="3" height="3"/><rect x="0" y="8" width="3" height="3"/><rect x="9" y="8" width="3" height="3"/></g></g></svg>
<span id="t28" style="left:80px;top:189.52px;font:11.2px/20px 'DejaVu Sans Mono', 'Liberation Mono', monospace;color:#000;letter-spacing:0.279px;">NO_THREAD_CORE_CPU0</span>
<svg style="left:45.4px;top:213.6px" width="7" height="11" viewBox="0 0 7 11" ><path d="M1.2 1.2L5.2 5.2L1.2 9.2" stroke="#a0a0a0" stroke-width="2" fill="none"/></svg>
<svg style="left:61px;top:213px" width="12" height="11" viewBox="0 0 12 11" ><g shape-rendering="crispEdges"><rect x="1.5" y="1.5" width="9" height="8" fill="#00c8c8" stroke="#1a3a4a"/><g fill="#000"><rect x="0" y="0" width="3" height="3"/><rect x="9" y="0" width="3" height="3"/><rect x="0" y="8" width="3" height="3"/><rect x="9" y="8" width="3" height="3"/></g></g></svg>
<span id="t29" style="left:80px;top:209.52px;font:11.2px/20px 'DejaVu Sans Mono', 'Liberation Mono', monospace;color:#000;letter-spacing:0.280px;">Unknown_CORE_CPU0</span>
<svg style="left:45.4px;top:233.6px" width="7" height="11" viewBox="0 0 7 11" ><path d="M1.2 1.2L5.2 5.2L1.2 9.2" stroke="#a0a0a0" stroke-width="2" fill="none"/></svg>
<svg style="left:61px;top:233px" width="12" height="11" viewBox="0 0 12 11" ><g shape-rendering="crispEdges"><rect x="1.5" y="1.5" width="9" height="8" fill="#00c8c8" stroke="#1a3a4a"/><g fill="#000"><rect x="0" y="0" width="3" height="3"/><rect x="9" y="0" width="3" height="3"/><rect x="0" y="8" width="3" height="3"/><rect x="9" y="8" width="3" height="3"/></g></g></svg>
<span id="t30" style="left:80px;top:229.52px;font:11.2px/20px 'DejaVu Sans Mono', 'Liberation Mono', monospace;color:#000;letter-spacing:0.278px;">UserTask_Core0_100ms</span>
<svg style="left:45.4px;top:253.6px" width="7" height="11" viewBox="0 0 7 11" ><path d="M1.2 1.2L5.2 5.2L1.2 9.2" stroke="#a0a0a0" stroke-width="2" fill="none"/></svg>
<svg style="left:61px;top:253px" width="12" height="11" viewBox="0 0 12 11" ><g shape-rendering="crispEdges"><rect x="1.5" y="1.5" width="9" height="8" fill="#00c8c8" stroke="#1a3a4a"/><g fill="#000"><rect x="0" y="0" width="3" height="3"/><rect x="9" y="0" width="3" height="3"/><rect x="0" y="8" width="3" height="3"/><rect x="9" y="8" width="3" height="3"/></g></g></svg>
<span id="t31" style="left:80px;top:249.52px;font:11.2px/20px 'DejaVu Sans Mono', 'Liberation Mono', monospace;color:#000;letter-spacing:0.281px;">CounterIsr_Core0</span>
<svg style="left:43.6px;top:275px" width="10" height="7" viewBox="0 0 10 7" ><path d="M0.9 1.2L5 5.2L9.1 1.2" stroke="#111" stroke-width="2" fill="none"/></svg>
<svg style="left:61px;top:273px" width="12" height="11" viewBox="0 0 12 11" ><g shape-rendering="crispEdges"><rect x="1.5" y="1.5" width="9" height="8" fill="#00c8c8" stroke="#1a3a4a"/><g fill="#000"><rect x="0" y="0" width="3" height="3"/><rect x="9" y="0" width="3" height="3"/><rect x="0" y="8" width="3" height="3"/><rect x="9" y="8" width="3" height="3"/></g></g></svg>
<span id="t32" style="left:80px;top:269.52px;font:11.2px/20px 'DejaVu Sans Mono', 'Liberation Mono', monospace;color:#000;letter-spacing:0.279px;">UserTask_Core0_1ms</span>
<svg style="left:77px;top:293px" width="12" height="11" viewBox="0 0 12 11" ><g shape-rendering="crispEdges"><rect x="1.5" y="1.5" width="9" height="8" fill="#00c8c8" stroke="#1a3a4a"/><g fill="#000"><rect x="0" y="0" width="3" height="3"/><rect x="9" y="0" width="3" height="3"/><rect x="0" y="8" width="3" height="3"/><rect x="9" y="8" width="3" height="3"/></g></g></svg>
<span id="t33" style="left:96px;top:289.52px;font:11.2px/20px 'DejaVu Sans Mono', 'Liberation Mono', monospace;color:#000;letter-spacing:0.391px;">NEW</span>
<svg style="left:77px;top:313px" width="12" height="11" viewBox="0 0 12 11" ><g shape-rendering="crispEdges"><rect x="1.5" y="1.5" width="9" height="8" fill="#00c8c8" stroke="#1a3a4a"/><g fill="#000"><rect x="0" y="0" width="3" height="3"/><rect x="9" y="0" width="3" height="3"/><rect x="0" y="8" width="3" height="3"/><rect x="9" y="8" width="3" height="3"/></g></g></svg>
<span id="t34" style="left:96px;top:309.52px;font:11.2px/20px 'DejaVu Sans Mono', 'Liberation Mono', monospace;color:#000;letter-spacing:0.307px;">RUNNING</span>
<svg style="left:77px;top:333px" width="12" height="11" viewBox="0 0 12 11" ><g shape-rendering="crispEdges"><rect x="1.5" y="1.5" width="9" height="8" fill="#00c8c8" stroke="#1a3a4a"/><g fill="#000"><rect x="0" y="0" width="3" height="3"/><rect x="9" y="0" width="3" height="3"/><rect x="0" y="8" width="3" height="3"/><rect x="9" y="8" width="3" height="3"/></g></g></svg>
<span id="t35" style="left:96px;top:329.52px;font:11.2px/20px 'DejaVu Sans Mono', 'Liberation Mono', monospace;color:#000;letter-spacing:0.282px;">TERMINATED_TASK</span>
<svg style="left:77px;top:353px" width="12" height="11" viewBox="0 0 12 11" ><g shape-rendering="crispEdges"><rect x="1.5" y="1.5" width="9" height="8" fill="#00c8c8" stroke="#1a3a4a"/><g fill="#000"><rect x="0" y="0" width="3" height="3"/><rect x="9" y="0" width="3" height="3"/><rect x="0" y="8" width="3" height="3"/><rect x="9" y="8" width="3" height="3"/></g></g></svg>
<span id="t36" style="left:96px;top:349.52px;font:11.2px/20px 'DejaVu Sans Mono', 'Liberation Mono', monospace;color:#000;letter-spacing:0.328px;">READY</span>
<svg style="left:45.4px;top:373.6px" width="7" height="11" viewBox="0 0 7 11" ><path d="M1.2 1.2L5.2 5.2L1.2 9.2" stroke="#a0a0a0" stroke-width="2" fill="none"/></svg>
<svg style="left:61px;top:373px" width="12" height="11" viewBox="0 0 12 11" ><g shape-rendering="crispEdges"><rect x="1.5" y="1.5" width="9" height="8" fill="#00c8c8" stroke="#1a3a4a"/><g fill="#000"><rect x="0" y="0" width="3" height="3"/><rect x="9" y="0" width="3" height="3"/><rect x="0" y="8" width="3" height="3"/><rect x="9" y="8" width="3" height="3"/></g></g></svg>
<span id="t37" style="left:80px;top:369.52px;font:11.2px/20px 'DejaVu Sans Mono', 'Liberation Mono', monospace;color:#000;letter-spacing:0.277px;">Default_BSW_Async_Task</span>
<svg style="left:45.4px;top:393.6px" width="7" height="11" viewBox="0 0 7 11" ><path d="M1.2 1.2L5.2 5.2L1.2 9.2" stroke="#a0a0a0" stroke-width="2" fill="none"/></svg>
<svg style="left:61px;top:393px" width="12" height="11" viewBox="0 0 12 11" ><g shape-rendering="crispEdges"><rect x="1.5" y="1.5" width="9" height="8" fill="#00c8c8" stroke="#1a3a4a"/><g fill="#000"><rect x="0" y="0" width="3" height="3"/><rect x="9" y="0" width="3" height="3"/><rect x="0" y="8" width="3" height="3"/><rect x="9" y="8" width="3" height="3"/></g></g></svg>
<span id="t38" style="left:80px;top:389.52px;font:11.2px/20px 'DejaVu Sans Mono', 'Liberation Mono', monospace;color:#000;letter-spacing:0.280px;">OsHighPrioEthTask</span>
<svg style="left:45.4px;top:413.6px" width="7" height="11" viewBox="0 0 7 11" ><path d="M1.2 1.2L5.2 5.2L1.2 9.2" stroke="#a0a0a0" stroke-width="2" fill="none"/></svg>
<svg style="left:61px;top:413px" width="12" height="11" viewBox="0 0 12 11" ><g shape-rendering="crispEdges"><rect x="1.5" y="1.5" width="9" height="8" fill="#00c8c8" stroke="#1a3a4a"/><g fill="#000"><rect x="0" y="0" width="3" height="3"/><rect x="9" y="0" width="3" height="3"/><rect x="0" y="8" width="3" height="3"/><rect x="9" y="8" width="3" height="3"/></g></g></svg>
<span id="t39" style="left:80px;top:409.52px;font:11.2px/20px 'DejaVu Sans Mono', 'Liberation Mono', monospace;color:#000;letter-spacing:0.279px;">UserTask_Core0_5ms</span>
<svg style="left:45.4px;top:433.6px" width="7" height="11" viewBox="0 0 7 11" ><path d="M1.2 1.2L5.2 5.2L1.2 9.2" stroke="#a0a0a0" stroke-width="2" fill="none"/></svg>
<svg style="left:61px;top:433px" width="12" height="11" viewBox="0 0 12 11" ><g shape-rendering="crispEdges"><rect x="1.5" y="1.5" width="9" height="8" fill="#00c8c8" stroke="#1a3a4a"/><g fill="#000"><rect x="0" y="0" width="3" height="3"/><rect x="9" y="0" width="3" height="3"/><rect x="0" y="8" width="3" height="3"/><rect x="9" y="8" width="3" height="3"/></g></g></svg>
<span id="t40" style="left:80px;top:429.52px;font:11.2px/20px 'DejaVu Sans Mono', 'Liberation Mono', monospace;color:#000;letter-spacing:0.279px;">UserTask_Core0_20ms</span>
<svg style="left:45.4px;top:453.6px" width="7" height="11" viewBox="0 0 7 11" ><path d="M1.2 1.2L5.2 5.2L1.2 9.2" stroke="#a0a0a0" stroke-width="2" fill="none"/></svg>
<svg style="left:61px;top:453px" width="12" height="11" viewBox="0 0 12 11" ><g shape-rendering="crispEdges"><rect x="1.5" y="1.5" width="9" height="8" fill="#00c8c8" stroke="#1a3a4a"/><g fill="#000"><rect x="0" y="0" width="3" height="3"/><rect x="9" y="0" width="3" height="3"/><rect x="0" y="8" width="3" height="3"/><rect x="9" y="8" width="3" height="3"/></g></g></svg>
<span id="t41" style="left:80px;top:449.52px;font:11.2px/20px 'DejaVu Sans Mono', 'Liberation Mono', monospace;color:#000;letter-spacing:0.281px;">OsLowPrioMemTask</span>
<svg style="left:45.4px;top:473.6px" width="7" height="11" viewBox="0 0 7 11" ><path d="M1.2 1.2L5.2 5.2L1.2 9.2" stroke="#a0a0a0" stroke-width="2" fill="none"/></svg>
<svg style="left:61px;top:473px" width="12" height="11" viewBox="0 0 12 11" ><g shape-rendering="crispEdges"><rect x="1.5" y="1.5" width="9" height="8" fill="#00c8c8" stroke="#1a3a4a"/><g fill="#000"><rect x="0" y="0" width="3" height="3"/><rect x="9" y="0" width="3" height="3"/><rect x="0" y="8" width="3" height="3"/><rect x="9" y="8" width="3" height="3"/></g></g></svg>
<span id="t42" style="left:80px;top:469.52px;font:11.2px/20px 'DejaVu Sans Mono', 'Liberation Mono', monospace;color:#000;letter-spacing:0.276px;">Default_Background_Task</span>
<svg style="left:13.4px;top:493.6px" width="7" height="11" viewBox="0 0 7 11" ><path d="M1.2 1.2L5.2 5.2L1.2 9.2" stroke="#a0a0a0" stroke-width="2" fill="none"/></svg>
<svg style="left:27px;top:490px" width="16" height="15" viewBox="0 0 16 15" ><g shape-rendering="crispEdges"><rect x="1.5" y="1.5" width="8" height="8" fill="#ffffb4" stroke="#3a4a6a"/><g fill="#000"><rect x="0" y="0" width="3" height="3"/><rect x="8" y="0" width="3" height="3"/><rect x="0" y="8" width="3" height="3"/></g><rect x="5.5" y="5.5" width="9" height="8" fill="#ffffb4" stroke="#3a4a6a"/><g fill="#000"><rect x="4" y="4" width="3" height="3"/><rect x="13" y="4" width="3" height="3"/><rect x="4" y="12" width="3" height="3"/><rect x="13" y="12" width="3" height="3"/></g></g></svg>
<span id="t43" style="left:48px;top:489.52px;font:11.2px/20px 'DejaVu Sans Mono', 'Liberation Mono', monospace;color:#000;letter-spacing:0.349px;">CPU1</span>
<svg style="left:13.4px;top:513.6px" width="7" height="11" viewBox="0 0 7 11" ><path d="M1.2 1.2L5.2 5.2L1.2 9.2" stroke="#a0a0a0" stroke-width="2" fill="none"/></svg>
<svg style="left:27px;top:510px" width="16" height="15" viewBox="0 0 16 15" ><g shape-rendering="crispEdges"><rect x="1.5" y="1.5" width="8" height="8" fill="#ffffb4" stroke="#3a4a6a"/><g fill="#000"><rect x="0" y="0" width="3" height="3"/><rect x="8" y="0" width="3" height="3"/><rect x="0" y="8" width="3" height="3"/></g><rect x="5.5" y="5.5" width="9" height="8" fill="#ffffb4" stroke="#3a4a6a"/><g fill="#000"><rect x="4" y="4" width="3" height="3"/><rect x="13" y="4" width="3" height="3"/><rect x="4" y="12" width="3" height="3"/><rect x="13" y="12" width="3" height="3"/></g></g></svg>
<span id="t44" style="left:48px;top:509.52px;font:11.2px/20px 'DejaVu Sans Mono', 'Liberation Mono', monospace;color:#000;letter-spacing:0.349px;">CPU2</span>
<svg style="left:13.4px;top:533.6px" width="7" height="11" viewBox="0 0 7 11" ><path d="M1.2 1.2L5.2 5.2L1.2 9.2" stroke="#a0a0a0" stroke-width="2" fill="none"/></svg>
<svg style="left:27px;top:530px" width="16" height="15" viewBox="0 0 16 15" ><g shape-rendering="crispEdges"><rect x="1.5" y="1.5" width="8" height="8" fill="#ffffb4" stroke="#3a4a6a"/><g fill="#000"><rect x="0" y="0" width="3" height="3"/><rect x="8" y="0" width="3" height="3"/><rect x="0" y="8" width="3" height="3"/></g><rect x="5.5" y="5.5" width="9" height="8" fill="#ffffb4" stroke="#3a4a6a"/><g fill="#000"><rect x="4" y="4" width="3" height="3"/><rect x="13" y="4" width="3" height="3"/><rect x="4" y="12" width="3" height="3"/><rect x="13" y="12" width="3" height="3"/></g></g></svg>
<span id="t45" style="left:48px;top:529.52px;font:11.2px/20px 'DejaVu Sans Mono', 'Liberation Mono', monospace;color:#000;letter-spacing:0.349px;">CPU3</span>
<svg style="left:13.4px;top:553.6px" width="7" height="11" viewBox="0 0 7 11" ><path d="M1.2 1.2L5.2 5.2L1.2 9.2" stroke="#a0a0a0" stroke-width="2" fill="none"/></svg>
<svg style="left:27px;top:550px" width="16" height="15" viewBox="0 0 16 15" ><g shape-rendering="crispEdges"><rect x="1.5" y="1.5" width="8" height="8" fill="#ffffb4" stroke="#3a4a6a"/><g fill="#000"><rect x="0" y="0" width="3" height="3"/><rect x="8" y="0" width="3" height="3"/><rect x="0" y="8" width="3" height="3"/></g><rect x="5.5" y="5.5" width="9" height="8" fill="#ffffb4" stroke="#3a4a6a"/><g fill="#000"><rect x="4" y="4" width="3" height="3"/><rect x="13" y="4" width="3" height="3"/><rect x="4" y="12" width="3" height="3"/><rect x="13" y="12" width="3" height="3"/></g></g></svg>
<span id="t46" style="left:48px;top:549.52px;font:11.2px/20px 'DejaVu Sans Mono', 'Liberation Mono', monospace;color:#000;letter-spacing:0.349px;">CPU4</span>
<svg style="left:13.4px;top:573.6px" width="7" height="11" viewBox="0 0 7 11" ><path d="M1.2 1.2L5.2 5.2L1.2 9.2" stroke="#a0a0a0" stroke-width="2" fill="none"/></svg>
<svg style="left:27px;top:570px" width="16" height="15" viewBox="0 0 16 15" ><g shape-rendering="crispEdges"><rect x="1.5" y="1.5" width="8" height="8" fill="#ffffb4" stroke="#3a4a6a"/><g fill="#000"><rect x="0" y="0" width="3" height="3"/><rect x="8" y="0" width="3" height="3"/><rect x="0" y="8" width="3" height="3"/></g><rect x="5.5" y="5.5" width="9" height="8" fill="#ffffb4" stroke="#3a4a6a"/><g fill="#000"><rect x="4" y="4" width="3" height="3"/><rect x="13" y="4" width="3" height="3"/><rect x="4" y="12" width="3" height="3"/><rect x="13" y="12" width="3" height="3"/></g></g></svg>
<span id="t47" style="left:48px;top:569.52px;font:11.2px/20px 'DejaVu Sans Mono', 'Liberation Mono', monospace;color:#000;letter-spacing:0.349px;">CPU5</span>
<svg style="left:13.4px;top:607.4px" width="7" height="11" viewBox="0 0 7 11" ><path d="M1.2 1.2L5.2 5.2L1.2 9.2" stroke="#a0a0a0" stroke-width="2" fill="none"/></svg>
<svg style="left:27px;top:604px" width="16" height="16" viewBox="0 0 16 16" ><rect x="0" y="0" width="16" height="16" fill="#ccd8e0"/>
<path d="M0 16V11.6L2.5 9.6L5 12L8 9.2L11 12L13.5 9.6L16 11.6V16Z" fill="#e87868"/>
<path d="M0 11.6L2.5 9.6L5 12L8 9.2L11 12L13.5 9.6L16 11.6" stroke="#dc3828" stroke-width="0.8" fill="none"/>
<path d="M0 6.8L2.5 4.8L5 7.2L8 4.6L11 7.2L13.5 5L16 6.8" stroke="#4c5c6c" stroke-width="0.9" fill="none"/></svg>
<span id="t48" style="left:48px;top:603.52px;font:11.2px/20px 'DejaVu Sans Mono', 'Liberation Mono', monospace;color:#000;letter-spacing:0.307px;">CPULoad</span>
<svg style="left:0px;top:0px" width="1006" height="652" viewBox="0 0 1006 652" ><g shape-rendering="crispEdges"><rect x="401" y="191" width="1" height="15" fill="#3f3fa6"/><rect x="403" y="191" width="4" height="15" fill="#3f3fa6"/><rect x="422" y="191" width="2" height="15" fill="#3f3fa6"/><rect x="443" y="191" width="1" height="15" fill="#3f3fa6"/><rect x="455" y="191" width="2" height="15" fill="#3f3fa6"/><rect x="472" y="191" width="2" height="15" fill="#3f3fa6"/><rect x="493" y="191" width="1" height="15" fill="#3f3fa6"/><rect x="522" y="191" width="4" height="15" fill="#3f3fa6"/><rect x="544" y="191" width="1" height="15" fill="#3f3fa6"/><rect x="555" y="191" width="2" height="15" fill="#3f3fa6"/><rect x="572" y="191" width="2" height="15" fill="#3f3fa6"/><rect x="593" y="191" width="1" height="15" fill="#3f3fa6"/><rect x="605" y="191" width="2" height="15" fill="#3f3fa6"/><rect x="622" y="191" width="2" height="15" fill="#3f3fa6"/><rect x="643" y="191" width="1" height="15" fill="#3f3fa6"/><rect x="655" y="191" width="2" height="15" fill="#3f3fa6"/><rect x="672" y="191" width="2" height="15" fill="#3f3fa6"/><rect x="693" y="191" width="1" height="15" fill="#3f3fa6"/><rect x="705" y="191" width="2" height="15" fill="#3f3fa6"/><rect x="722" y="191" width="1" height="15" fill="#3f3fa6"/><rect x="743" y="191" width="1" height="15" fill="#3f3fa6"/><rect x="772" y="191" width="4" height="15" fill="#3f3fa6"/><rect x="794" y="191" width="1" height="15" fill="#3f3fa6"/><rect x="805" y="191" width="2" height="15" fill="#3f3fa6"/><rect x="822" y="191" width="2" height="15" fill="#3f3fa6"/><rect x="843" y="191" width="1" height="15" fill="#3f3fa6"/><rect x="855" y="191" width="2" height="15" fill="#3f3fa6"/><rect x="872" y="191" width="2" height="15" fill="#3f3fa6"/><rect x="893" y="191" width="1" height="15" fill="#3f3fa6"/><rect x="905" y="191" width="2" height="15" fill="#3f3fa6"/><rect x="922" y="191" width="2" height="15" fill="#3f3fa6"/><rect x="943" y="191" width="1" height="15" fill="#3f3fa6"/><rect x="955" y="191" width="2" height="15" fill="#3f3fa6"/><rect x="972" y="191" width="2" height="15" fill="#3f3fa6"/><rect x="993" y="191" width="1" height="15" fill="#3f3fa6"/><rect x="502" y="191" width="1" height="15" fill="#3f3fa6"/><rect x="504" y="191" width="4" height="15" fill="#3f3fa6"/><rect x="510" y="191" width="1" height="15" fill="#3f3fa6"/><rect x="752" y="191" width="2" height="15" fill="#3f3fa6"/><rect x="755" y="191" width="3" height="15" fill="#3f3fa6"/><g fill="#a52a2a"><rect x="397" y="173" width="4" height="1"/><rect x="401" y="181" width="1" height="4"/><rect x="401" y="181" width="3" height="1"/><rect x="403" y="170" width="1" height="15"/><rect x="404" y="170" width="1" height="15"/><rect x="405" y="170" width="1" height="15"/><rect x="406" y="177" width="1" height="8"/><rect x="407" y="170" width="16" height="1"/><rect x="422" y="170" width="1" height="15"/><rect x="423" y="170" width="1" height="15"/><rect x="424" y="178" width="20" height="1"/><rect x="443" y="170" width="1" height="15"/><rect x="443" y="170" width="13" height="1"/><rect x="455" y="170" width="1" height="15"/><rect x="456" y="177" width="1" height="8"/><rect x="457" y="170" width="16" height="1"/><rect x="472" y="170" width="1" height="15"/><rect x="473" y="170" width="1" height="15"/><rect x="474" y="178" width="20" height="1"/><rect x="493" y="170" width="1" height="15"/><rect x="522" y="170" width="1" height="15"/><rect x="523" y="170" width="1" height="15"/><rect x="524" y="178" width="1" height="7"/><rect x="525" y="178" width="1" height="7"/><rect x="526" y="178" width="19" height="1"/><rect x="544" y="170" width="1" height="15"/><rect x="544" y="170" width="12" height="1"/><rect x="555" y="170" width="1" height="15"/><rect x="556" y="177" width="1" height="8"/><rect x="557" y="170" width="16" height="1"/><rect x="572" y="170" width="1" height="15"/><rect x="573" y="170" width="1" height="15"/><rect x="574" y="178" width="20" height="1"/><rect x="593" y="170" width="1" height="15"/><rect x="593" y="170" width="13" height="1"/><rect x="605" y="170" width="1" height="15"/><rect x="606" y="177" width="1" height="8"/><rect x="607" y="170" width="16" height="1"/><rect x="622" y="170" width="1" height="15"/><rect x="623" y="170" width="1" height="15"/><rect x="624" y="178" width="20" height="1"/><rect x="643" y="170" width="1" height="15"/><rect x="643" y="170" width="13" height="1"/><rect x="655" y="170" width="1" height="15"/><rect x="656" y="177" width="1" height="8"/><rect x="657" y="170" width="16" height="1"/><rect x="672" y="170" width="1" height="15"/><rect x="673" y="170" width="1" height="15"/><rect x="674" y="178" width="20" height="1"/><rect x="693" y="170" width="1" height="15"/><rect x="693" y="170" width="13" height="1"/><rect x="705" y="170" width="1" height="15"/><rect x="706" y="177" width="1" height="8"/><rect x="707" y="170" width="16" height="1"/><rect x="722" y="170" width="1" height="15"/><rect x="723" y="178" width="1" height="7"/><rect x="724" y="178" width="20" height="1"/><rect x="743" y="170" width="1" height="15"/><rect x="772" y="170" width="1" height="15"/><rect x="773" y="170" width="1" height="15"/><rect x="774" y="178" width="1" height="7"/><rect x="775" y="178" width="1" height="7"/><rect x="776" y="178" width="19" height="1"/><rect x="794" y="170" width="1" height="15"/><rect x="794" y="170" width="12" height="1"/><rect x="805" y="170" width="1" height="15"/><rect x="806" y="177" width="1" height="8"/><rect x="807" y="170" width="16" height="1"/><rect x="822" y="170" width="1" height="15"/><rect x="823" y="170" width="1" height="15"/><rect x="824" y="178" width="20" height="1"/><rect x="843" y="170" width="1" height="15"/><rect x="843" y="170" width="13" height="1"/><rect x="855" y="170" width="1" height="15"/><rect x="856" y="177" width="1" height="8"/><rect x="857" y="170" width="16" height="1"/><rect x="872" y="170" width="1" height="15"/><rect x="873" y="170" width="1" height="15"/><rect x="874" y="178" width="20" height="1"/><rect x="893" y="170" width="1" height="15"/><rect x="893" y="170" width="13" height="1"/><rect x="905" y="170" width="1" height="15"/><rect x="906" y="177" width="1" height="8"/><rect x="907" y="170" width="16" height="1"/><rect x="922" y="170" width="1" height="15"/><rect x="923" y="170" width="1" height="15"/><rect x="924" y="178" width="20" height="1"/><rect x="943" y="170" width="1" height="15"/><rect x="943" y="170" width="13" height="1"/><rect x="955" y="170" width="1" height="15"/><rect x="956" y="177" width="1" height="8"/><rect x="957" y="170" width="16" height="1"/><rect x="972" y="170" width="1" height="15"/><rect x="973" y="170" width="1" height="15"/><rect x="974" y="178" width="20" height="1"/><rect x="993" y="170" width="1" height="15"/><rect x="993" y="170" width="8" height="1"/><rect x="493" y="170" width="10" height="1"/><rect x="502" y="170" width="1" height="15"/><rect x="503" y="176" width="4" height="1"/><rect x="504" y="176" width="1" height="9"/><rect x="505" y="176" width="1" height="9"/><rect x="506" y="176" width="1" height="9"/><rect x="507" y="177" width="1" height="8"/><rect x="507" y="177" width="4" height="1"/><rect x="510" y="177" width="1" height="8"/><rect x="511" y="170" width="12" height="1"/><rect x="743" y="170" width="10" height="1"/><rect x="752" y="170" width="1" height="15"/><rect x="753" y="176" width="1" height="9"/><rect x="753" y="176" width="3" height="1"/><rect x="755" y="176" width="1" height="9"/><rect x="756" y="177" width="1" height="8"/><rect x="757" y="177" width="1" height="8"/><rect x="758" y="170" width="15" height="1"/></g><rect x="397" y="231" width="6" height="15" fill="#d49595"/><rect x="397" y="231" width="6" height="1" fill="#a86f6f"/><rect x="397" y="245" width="6" height="1" fill="#a86f6f"/><rect x="401" y="231" width="2" height="15" fill="#a52a2a"/><rect x="401" y="231" width="2" height="1" fill="#7a1c1c"/><rect x="401" y="245" width="2" height="1" fill="#7a1c1c"/><rect x="422" y="251" width="1" height="15" fill="#3f3fa6"/><rect x="405" y="251" width="1" height="15" fill="#a52a2a"/><rect x="472" y="251" width="1" height="15" fill="#3f3fa6"/><rect x="455" y="251" width="1" height="15" fill="#a52a2a"/><rect x="522" y="251" width="1" height="15" fill="#3f3fa6"/><rect x="502" y="251" width="1" height="15" fill="#3f3fa6"/><rect x="504" y="251" width="3" height="15" fill="#3f3fa6"/><rect x="572" y="251" width="1" height="15" fill="#3f3fa6"/><rect x="555" y="251" width="1" height="15" fill="#a52a2a"/><rect x="622" y="251" width="1" height="15" fill="#3f3fa6"/><rect x="605" y="251" width="1" height="15" fill="#a52a2a"/><rect x="672" y="251" width="1" height="15" fill="#3f3fa6"/><rect x="655" y="251" width="1" height="15" fill="#a52a2a"/><rect x="722" y="251" width="1" height="15" fill="#3f3fa6"/><rect x="705" y="251" width="1" height="15" fill="#a52a2a"/><rect x="772" y="251" width="1" height="15" fill="#3f3fa6"/><rect x="752" y="251" width="1" height="15" fill="#3f3fa6"/><rect x="755" y="251" width="1" height="15" fill="#3f3fa6"/><rect x="822" y="251" width="1" height="15" fill="#3f3fa6"/><rect x="805" y="251" width="1" height="15" fill="#a52a2a"/><rect x="872" y="251" width="1" height="15" fill="#3f3fa6"/><rect x="855" y="251" width="1" height="15" fill="#a52a2a"/><rect x="922" y="251" width="1" height="15" fill="#3f3fa6"/><rect x="905" y="251" width="1" height="15" fill="#a52a2a"/><rect x="972" y="251" width="1" height="15" fill="#3f3fa6"/><rect x="955" y="251" width="1" height="15" fill="#3f3fa6"/><rect x="524" y="251" width="1" height="15" fill="#a52a2a"/><rect x="774" y="251" width="1" height="15" fill="#a52a2a"/><rect x="422" y="271" width="21" height="15" fill="#a52a2a"/><rect x="422" y="271" width="21" height="1" fill="#7a1c1c"/><rect x="422" y="285" width="21" height="1" fill="#7a1c1c"/><rect x="442" y="271" width="1" height="15" fill="#7a1c1c"/><rect x="422" y="272" width="1" height="13" fill="#d48c8c"/><rect x="422" y="291" width="1" height="15" fill="#a5a500"/><rect x="423" y="311" width="20" height="15" fill="#a52a2a"/><rect x="423" y="311" width="20" height="1" fill="#7a1c1c"/><rect x="423" y="325" width="20" height="1" fill="#7a1c1c"/><rect x="397" y="331" width="25" height="15" fill="#a5a500"/><rect x="397" y="331" width="25" height="1" fill="#7d7d00"/><rect x="397" y="345" width="25" height="1" fill="#7d7d00"/><rect x="472" y="271" width="21" height="15" fill="#a52a2a"/><rect x="472" y="271" width="21" height="1" fill="#7a1c1c"/><rect x="472" y="285" width="21" height="1" fill="#7a1c1c"/><rect x="492" y="271" width="1" height="15" fill="#7a1c1c"/><rect x="472" y="272" width="1" height="13" fill="#d48c8c"/><rect x="472" y="291" width="1" height="15" fill="#a5a500"/><rect x="473" y="311" width="20" height="15" fill="#a52a2a"/><rect x="473" y="311" width="20" height="1" fill="#7a1c1c"/><rect x="473" y="325" width="20" height="1" fill="#7a1c1c"/><rect x="443" y="331" width="29" height="15" fill="#a5a500"/><rect x="443" y="331" width="29" height="1" fill="#7d7d00"/><rect x="443" y="345" width="29" height="1" fill="#7d7d00"/><rect x="522" y="271" width="22" height="15" fill="#a52a2a"/><rect x="522" y="271" width="22" height="1" fill="#7a1c1c"/><rect x="522" y="285" width="22" height="1" fill="#7a1c1c"/><rect x="543" y="271" width="1" height="15" fill="#7a1c1c"/><rect x="522" y="272" width="1" height="13" fill="#d48c8c"/><rect x="524" y="272" width="1" height="13" fill="#f0d0d0"/><rect x="522" y="291" width="1" height="15" fill="#a5a500"/><rect x="523" y="311" width="1" height="15" fill="#a52a2a"/><rect x="525" y="311" width="19" height="15" fill="#a52a2a"/><rect x="525" y="311" width="19" height="1" fill="#7a1c1c"/><rect x="525" y="325" width="19" height="1" fill="#7a1c1c"/><rect x="524" y="351" width="1" height="15" fill="#a5a500"/><rect x="493" y="331" width="29" height="15" fill="#a5a500"/><rect x="493" y="331" width="29" height="1" fill="#7d7d00"/><rect x="493" y="345" width="29" height="1" fill="#7d7d00"/><rect x="572" y="271" width="21" height="15" fill="#a52a2a"/><rect x="572" y="271" width="21" height="1" fill="#7a1c1c"/><rect x="572" y="285" width="21" height="1" fill="#7a1c1c"/><rect x="592" y="271" width="1" height="15" fill="#7a1c1c"/><rect x="572" y="272" width="1" height="13" fill="#d48c8c"/><rect x="572" y="291" width="1" height="15" fill="#a5a500"/><rect x="573" y="311" width="20" height="15" fill="#a52a2a"/><rect x="573" y="311" width="20" height="1" fill="#7a1c1c"/><rect x="573" y="325" width="20" height="1" fill="#7a1c1c"/><rect x="544" y="331" width="28" height="15" fill="#a5a500"/><rect x="544" y="331" width="28" height="1" fill="#7d7d00"/><rect x="544" y="345" width="28" height="1" fill="#7d7d00"/><rect x="622" y="271" width="21" height="15" fill="#a52a2a"/><rect x="622" y="271" width="21" height="1" fill="#7a1c1c"/><rect x="622" y="285" width="21" height="1" fill="#7a1c1c"/><rect x="642" y="271" width="1" height="15" fill="#7a1c1c"/><rect x="622" y="272" width="1" height="13" fill="#d48c8c"/><rect x="622" y="291" width="1" height="15" fill="#a5a500"/><rect x="623" y="311" width="20" height="15" fill="#a52a2a"/><rect x="623" y="311" width="20" height="1" fill="#7a1c1c"/><rect x="623" y="325" width="20" height="1" fill="#7a1c1c"/><rect x="593" y="331" width="29" height="15" fill="#a5a500"/><rect x="593" y="331" width="29" height="1" fill="#7d7d00"/><rect x="593" y="345" width="29" height="1" fill="#7d7d00"/><rect x="672" y="271" width="21" height="15" fill="#a52a2a"/><rect x="672" y="271" width="21" height="1" fill="#7a1c1c"/><rect x="672" y="285" width="21" height="1" fill="#7a1c1c"/><rect x="692" y="271" width="1" height="15" fill="#7a1c1c"/><rect x="672" y="272" width="1" height="13" fill="#d48c8c"/><rect x="672" y="291" width="1" height="15" fill="#a5a500"/><rect x="673" y="311" width="20" height="15" fill="#a52a2a"/><rect x="673" y="311" width="20" height="1" fill="#7a1c1c"/><rect x="673" y="325" width="20" height="1" fill="#7a1c1c"/><rect x="643" y="331" width="29" height="15" fill="#a5a500"/><rect x="643" y="331" width="29" height="1" fill="#7d7d00"/><rect x="643" y="345" width="29" height="1" fill="#7d7d00"/><rect x="722" y="271" width="21" height="15" fill="#a52a2a"/><rect x="722" y="271" width="21" height="1" fill="#7a1c1c"/><rect x="722" y="285" width="21" height="1" fill="#7a1c1c"/><rect x="742" y="271" width="1" height="15" fill="#7a1c1c"/><rect x="722" y="272" width="1" height="13" fill="#d48c8c"/><rect x="722" y="291" width="1" height="15" fill="#a5a500"/><rect x="723" y="311" width="20" height="15" fill="#a52a2a"/><rect x="723" y="311" width="20" height="1" fill="#7a1c1c"/><rect x="723" y="325" width="20" height="1" fill="#7a1c1c"/><rect x="693" y="331" width="29" height="15" fill="#a5a500"/><rect x="693" y="331" width="29" height="1" fill="#7d7d00"/><rect x="693" y="345" width="29" height="1" fill="#7d7d00"/><rect x="772" y="271" width="22" height="15" fill="#a52a2a"/><rect x="772" y="271" width="22" height="1" fill="#7a1c1c"/><rect x="772" y="285" width="22" height="1" fill="#7a1c1c"/><rect x="793" y="271" width="1" height="15" fill="#7a1c1c"/><rect x="772" y="272" width="1" height="13" fill="#d48c8c"/><rect x="774" y="272" width="1" height="13" fill="#f0d0d0"/><rect x="772" y="291" width="1" height="15" fill="#a5a500"/><rect x="773" y="311" width="1" height="15" fill="#a52a2a"/><rect x="775" y="311" width="19" height="15" fill="#a52a2a"/><rect x="775" y="311" width="19" height="1" fill="#7a1c1c"/><rect x="775" y="325" width="19" height="1" fill="#7a1c1c"/><rect x="774" y="351" width="1" height="15" fill="#a5a500"/><rect x="743" y="331" width="29" height="15" fill="#a5a500"/><rect x="743" y="331" width="29" height="1" fill="#7d7d00"/><rect x="743" y="345" width="29" height="1" fill="#7d7d00"/><rect x="822" y="271" width="21" height="15" fill="#a52a2a"/><rect x="822" y="271" width="21" height="1" fill="#7a1c1c"/><rect x="822" y="285" width="21" height="1" fill="#7a1c1c"/><rect x="842" y="271" width="1" height="15" fill="#7a1c1c"/><rect x="822" y="272" width="1" height="13" fill="#d48c8c"/><rect x="822" y="291" width="1" height="15" fill="#a5a500"/><rect x="823" y="311" width="20" height="15" fill="#a52a2a"/><rect x="823" y="311" width="20" height="1" fill="#7a1c1c"/><rect x="823" y="325" width="20" height="1" fill="#7a1c1c"/><rect x="794" y="331" width="28" height="15" fill="#a5a500"/><rect x="794" y="331" width="28" height="1" fill="#7d7d00"/><rect x="794" y="345" width="28" height="1" fill="#7d7d00"/><rect x="872" y="271" width="21" height="15" fill="#a52a2a"/><rect x="872" y="271" width="21" height="1" fill="#7a1c1c"/><rect x="872" y="285" width="21" height="1" fill="#7a1c1c"/><rect x="892" y="271" width="1" height="15" fill="#7a1c1c"/><rect x="872" y="272" width="1" height="13" fill="#d48c8c"/><rect x="872" y="291" width="1" height="15" fill="#a5a500"/><rect x="873" y="311" width="20" height="15" fill="#a52a2a"/><rect x="873" y="311" width="20" height="1" fill="#7a1c1c"/><rect x="873" y="325" width="20" height="1" fill="#7a1c1c"/><rect x="843" y="331" width="29" height="15" fill="#a5a500"/><rect x="843" y="331" width="29" height="1" fill="#7d7d00"/><rect x="843" y="345" width="29" height="1" fill="#7d7d00"/><rect x="922" y="271" width="21" height="15" fill="#a52a2a"/><rect x="922" y="271" width="21" height="1" fill="#7a1c1c"/><rect x="922" y="285" width="21" height="1" fill="#7a1c1c"/><rect x="942" y="271" width="1" height="15" fill="#7a1c1c"/><rect x="922" y="272" width="1" height="13" fill="#d48c8c"/><rect x="922" y="291" width="1" height="15" fill="#a5a500"/><rect x="923" y="311" width="20" height="15" fill="#a52a2a"/><rect x="923" y="311" width="20" height="1" fill="#7a1c1c"/><rect x="923" y="325" width="20" height="1" fill="#7a1c1c"/><rect x="893" y="331" width="29" height="15" fill="#a5a500"/><rect x="893" y="331" width="29" height="1" fill="#7d7d00"/><rect x="893" y="345" width="29" height="1" fill="#7d7d00"/><rect x="972" y="271" width="21" height="15" fill="#a52a2a"/><rect x="972" y="271" width="21" height="1" fill="#7a1c1c"/><rect x="972" y="285" width="21" height="1" fill="#7a1c1c"/><rect x="992" y="271" width="1" height="15" fill="#7a1c1c"/><rect x="972" y="272" width="1" height="13" fill="#d48c8c"/><rect x="972" y="291" width="1" height="15" fill="#a5a500"/><rect x="973" y="311" width="20" height="15" fill="#a52a2a"/><rect x="973" y="311" width="20" height="1" fill="#7a1c1c"/><rect x="973" y="325" width="20" height="1" fill="#7a1c1c"/><rect x="943" y="331" width="29" height="15" fill="#a5a500"/><rect x="943" y="331" width="29" height="1" fill="#7d7d00"/><rect x="943" y="345" width="29" height="1" fill="#7d7d00"/><rect x="993" y="331" width="8" height="15" fill="#a5a500"/><rect x="993" y="331" width="8" height="1" fill="#7d7d00"/><rect x="993" y="345" width="8" height="1" fill="#7d7d00"/><rect x="405" y="371" width="1" height="15" fill="#e0a8a8"/><rect x="406" y="371" width="1" height="15" fill="#3f3fa6"/><rect x="455" y="371" width="1" height="15" fill="#e0a8a8"/><rect x="456" y="371" width="1" height="15" fill="#3f3fa6"/><rect x="504" y="371" width="3" height="15" fill="#d49595"/><rect x="504" y="371" width="3" height="1" fill="#a86f6f"/><rect x="504" y="385" width="3" height="1" fill="#a86f6f"/><rect x="507" y="371" width="3" height="15" fill="#a52a2a"/><rect x="507" y="371" width="3" height="1" fill="#7a1c1c"/><rect x="507" y="385" width="3" height="1" fill="#7a1c1c"/><rect x="555" y="371" width="1" height="15" fill="#e0a8a8"/><rect x="556" y="371" width="1" height="15" fill="#3f3fa6"/><rect x="605" y="371" width="1" height="15" fill="#e0a8a8"/><rect x="606" y="371" width="1" height="15" fill="#3f3fa6"/><rect x="655" y="371" width="1" height="15" fill="#e0a8a8"/><rect x="656" y="371" width="1" height="15" fill="#3f3fa6"/><rect x="705" y="371" width="1" height="15" fill="#e0a8a8"/><rect x="706" y="371" width="1" height="15" fill="#3f3fa6"/><rect x="755" y="371" width="1" height="15" fill="#d49595"/><rect x="756" y="371" width="1" height="15" fill="#a52a2a"/><rect x="805" y="371" width="1" height="15" fill="#e0a8a8"/><rect x="806" y="371" width="1" height="15" fill="#3f3fa6"/><rect x="855" y="371" width="1" height="15" fill="#e0a8a8"/><rect x="856" y="371" width="1" height="15" fill="#3f3fa6"/><rect x="905" y="371" width="1" height="15" fill="#e0a8a8"/><rect x="906" y="371" width="1" height="15" fill="#3f3fa6"/><rect x="955" y="371" width="1" height="15" fill="#e0a8a8"/><rect x="956" y="371" width="1" height="15" fill="#3f3fa6"/><rect x="502" y="391" width="5" height="15" fill="#3f3fa6"/><rect x="502" y="391" width="5" height="1" fill="#23237e"/><rect x="502" y="405" width="5" height="1" fill="#23237e"/><rect x="503" y="392" width="1" height="13" fill="#a52a2a"/><rect x="752" y="391" width="4" height="15" fill="#3f3fa6"/><rect x="752" y="391" width="4" height="1" fill="#23237e"/><rect x="752" y="405" width="4" height="1" fill="#23237e"/><rect x="753" y="392" width="2" height="13" fill="#a52a2a"/><rect x="524" y="411" width="21" height="15" fill="#d49595"/><rect x="524" y="411" width="21" height="1" fill="#a86f6f"/><rect x="524" y="425" width="21" height="1" fill="#a86f6f"/><rect x="544" y="411" width="1" height="15" fill="#3f3fa6"/><rect x="774" y="411" width="21" height="15" fill="#d49595"/><rect x="774" y="411" width="21" height="1" fill="#a86f6f"/><rect x="774" y="425" width="21" height="1" fill="#a86f6f"/><rect x="794" y="411" width="1" height="15" fill="#3f3fa6"/><rect x="397" y="431" width="4" height="15" fill="#a52a2a"/><rect x="397" y="431" width="4" height="1" fill="#7a1c1c"/><rect x="397" y="445" width="4" height="1" fill="#7a1c1c"/><rect x="397" y="451" width="7" height="15" fill="#d49595"/><rect x="397" y="451" width="7" height="1" fill="#a86f6f"/><rect x="397" y="465" width="7" height="1" fill="#a86f6f"/><rect x="403" y="451" width="1" height="15" fill="#a52a2a"/><rect x="506" y="451" width="5" height="15" fill="#d49595"/><rect x="506" y="451" width="5" height="1" fill="#a86f6f"/><rect x="506" y="465" width="5" height="1" fill="#a86f6f"/><rect x="510" y="451" width="1" height="15" fill="#3f3fa6"/><rect x="397" y="471" width="604" height="15" fill="#a52a2a"/><rect x="397" y="471" width="7" height="15" fill="#d49595"/><rect x="405" y="471" width="1" height="15" fill="#d49595"/><rect x="406" y="471" width="1" height="15" fill="#3f3fa6"/><rect x="422" y="471" width="1" height="15" fill="#3f3fa6"/><rect x="423" y="471" width="20" height="15" fill="#d49595"/><rect x="456" y="471" width="1" height="15" fill="#3f3fa6"/><rect x="472" y="471" width="1" height="15" fill="#3f3fa6"/><rect x="473" y="471" width="20" height="15" fill="#d49595"/><rect x="502" y="471" width="1" height="15" fill="#3f3fa6"/><rect x="503" y="471" width="7" height="15" fill="#d49595"/><rect x="522" y="471" width="1" height="15" fill="#3f3fa6"/><rect x="523" y="471" width="21" height="15" fill="#d49595"/><rect x="556" y="471" width="1" height="15" fill="#3f3fa6"/><rect x="572" y="471" width="1" height="15" fill="#3f3fa6"/><rect x="573" y="471" width="20" height="15" fill="#d49595"/><rect x="606" y="471" width="1" height="15" fill="#3f3fa6"/><rect x="622" y="471" width="1" height="15" fill="#3f3fa6"/><rect x="623" y="471" width="20" height="15" fill="#d49595"/><rect x="656" y="471" width="1" height="15" fill="#3f3fa6"/><rect x="672" y="471" width="1" height="15" fill="#3f3fa6"/><rect x="673" y="471" width="20" height="15" fill="#d49595"/><rect x="706" y="471" width="1" height="15" fill="#3f3fa6"/><rect x="722" y="471" width="1" height="15" fill="#3f3fa6"/><rect x="723" y="471" width="20" height="15" fill="#d49595"/><rect x="752" y="471" width="1" height="15" fill="#3f3fa6"/><rect x="753" y="471" width="4" height="15" fill="#d49595"/><rect x="772" y="471" width="1" height="15" fill="#3f3fa6"/><rect x="773" y="471" width="21" height="15" fill="#d49595"/><rect x="806" y="471" width="1" height="15" fill="#3f3fa6"/><rect x="822" y="471" width="1" height="15" fill="#3f3fa6"/><rect x="823" y="471" width="20" height="15" fill="#d49595"/><rect x="856" y="471" width="1" height="15" fill="#3f3fa6"/><rect x="872" y="471" width="1" height="15" fill="#3f3fa6"/><rect x="873" y="471" width="20" height="15" fill="#d49595"/><rect x="906" y="471" width="1" height="15" fill="#3f3fa6"/><rect x="922" y="471" width="1" height="15" fill="#3f3fa6"/><rect x="923" y="471" width="20" height="15" fill="#d49595"/><rect x="955" y="471" width="2" height="15" fill="#3f3fa6"/><rect x="972" y="471" width="1" height="15" fill="#3f3fa6"/><rect x="973" y="471" width="20" height="15" fill="#d49595"/><rect x="397" y="471" width="604" height="1" fill="#5a1010" opacity="0.55"/><rect x="397" y="485" width="604" height="1" fill="#5a1010" opacity="0.55"/><rect x="397" y="602" width="604" height="31" fill="#fde4e4"/><rect x="397" y="601" width="604" height="1" fill="#a52a2a"/></g></svg>
</div></body></html>
